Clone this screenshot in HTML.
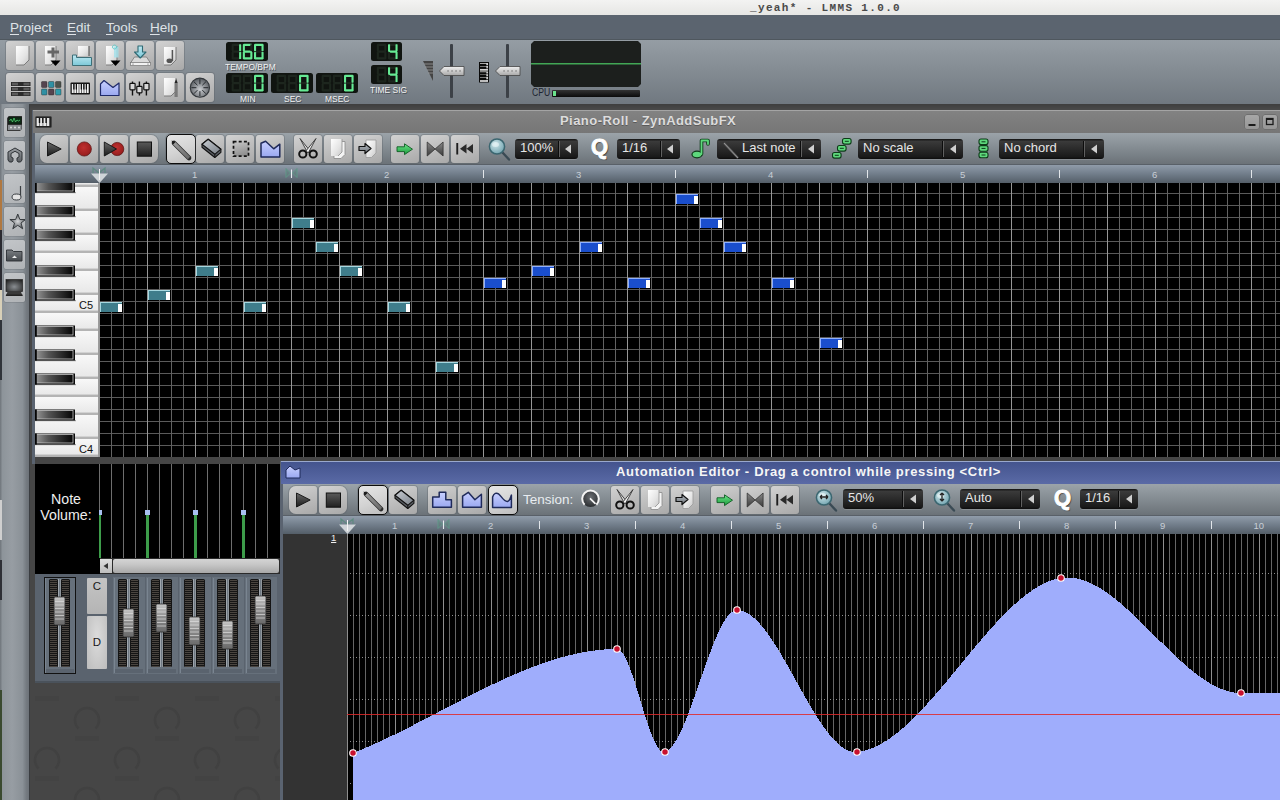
<!DOCTYPE html><html><head><meta charset="utf-8"><style>
*{margin:0;padding:0;box-sizing:border-box}
html,body{width:1280px;height:800px;overflow:hidden;background:#3a3a3a;font-family:"Liberation Sans",sans-serif}
div,svg,span{position:absolute}
.btn{border-radius:3px;background:linear-gradient(160deg,#d2d2d2 0%,#bfbfbf 45%,#a9a9a9 100%);box-shadow:0 0 0 1px rgba(90,95,100,0.35)}
.btn.sel{border:1.5px solid #0c0c0c;border-radius:5px;background:linear-gradient(160deg,#e6e6e6 0%,#d3d3d3 55%,#bdbdbd 100%)}
.combo{height:20px;border-radius:3px;background:linear-gradient(#111 0,#3a3a3a 12%,#2a2a2a 50%,#1a1a1a 88%,#0c0c0c 100%);box-shadow:0 1px 0 rgba(200,200,200,0.25);color:#e6e6e6;font-size:13px;line-height:18px;white-space:nowrap}
.combo .dv{top:2px;bottom:2px;width:1px;background:#606060;box-shadow:-1px 0 0 #0c0c0c}
.lbl{color:#f2f2f2;font-size:9.6px;white-space:nowrap;line-height:10px}
</style></head><body>
<svg width="0" height="0" style="position:absolute"><defs>
<linearGradient id="gPage" x1="0" y1="0" x2="1" y2="1"><stop offset="0" stop-color="#ffffff"/><stop offset="0.6" stop-color="#e4e4e4"/><stop offset="1" stop-color="#c8c8c8"/></linearGradient>
<linearGradient id="gBlackKey" x1="0" y1="0" x2="1" y2="0"><stop offset="0" stop-color="#9a9a9a"/><stop offset="0.35" stop-color="#555"/><stop offset="1" stop-color="#050505"/></linearGradient>
<linearGradient id="gWhiteKey" x1="0" y1="0" x2="0" y2="1"><stop offset="0" stop-color="#f8f8f8"/><stop offset="1" stop-color="#e6e6e6"/></linearGradient>
<linearGradient id="gDark" x1="0" y1="0" x2="1" y2="1"><stop offset="0" stop-color="#777"/><stop offset="1" stop-color="#111"/></linearGradient>
<radialGradient id="gRed" cx="0.45" cy="0.4" r="0.65"><stop offset="0" stop-color="#bf3030"/><stop offset="0.8" stop-color="#9c1f1f"/><stop offset="1" stop-color="#7a1515"/></radialGradient><linearGradient id="gDark2" x1="0" y1="0" x2="0" y2="1"><stop offset="0" stop-color="#6a6a6a"/><stop offset="1" stop-color="#1a1a1a"/></linearGradient><linearGradient id="gDark3" x1="0" y1="0" x2="0" y2="1"><stop offset="0" stop-color="#5a5a5a"/><stop offset="1" stop-color="#202020"/></linearGradient>
<linearGradient id="gPen" x1="0" y1="0" x2="1" y2="1"><stop offset="0" stop-color="#9a9a9a"/><stop offset="1" stop-color="#6a6a6a"/></linearGradient><linearGradient id="gErase" x1="0" y1="0" x2="1" y2="1"><stop offset="0" stop-color="#c9ced4"/><stop offset="1" stop-color="#7a8088"/></linearGradient><linearGradient id="gSel" x1="0" y1="0" x2="0.3" y2="1"><stop offset="0" stop-color="#c8c8c8"/><stop offset="1" stop-color="#909090"/></linearGradient><linearGradient id="gGrayArr" x1="0" y1="0" x2="0" y2="1"><stop offset="0" stop-color="#b8bec4"/><stop offset="1" stop-color="#6a7076"/></linearGradient><linearGradient id="gBow" x1="0" y1="0" x2="0" y2="1"><stop offset="0" stop-color="#8a8a8a"/><stop offset="1" stop-color="#3a3a3a"/></linearGradient><radialGradient id="gLens" cx="0.4" cy="0.35" r="0.7"><stop offset="0" stop-color="#cfe6ea"/><stop offset="1" stop-color="#6fa2ae"/></radialGradient><radialGradient id="gKnobDark" cx="0.5" cy="0.4" r="0.6"><stop offset="0" stop-color="#6a6e72"/><stop offset="1" stop-color="#2a2d30"/></radialGradient><linearGradient id="gSbHead" x1="0" y1="0" x2="0" y2="1"><stop offset="0" stop-color="#9a9ea2"/><stop offset="1" stop-color="#5a5e62"/></linearGradient><radialGradient id="gStar" cx="0.5" cy="0.5" r="0.55"><stop offset="0" stop-color="#d8dadc"/><stop offset="1" stop-color="#4a4e52"/></radialGradient><linearGradient id="gFold" x1="0" y1="0" x2="0" y2="1"><stop offset="0" stop-color="#7a7e82"/><stop offset="1" stop-color="#45494d"/></linearGradient><radialGradient id="gMon" cx="0.5" cy="0.6" r="0.7"><stop offset="0" stop-color="#8a8e92"/><stop offset="1" stop-color="#222"/></radialGradient><linearGradient id="gKnobSl" x1="0" y1="0" x2="0" y2="1"><stop offset="0" stop-color="#f0f0f0"/><stop offset="1" stop-color="#a8a8a8"/></linearGradient><linearGradient id="gLav" x1="0" y1="0" x2="0" y2="1"><stop offset="0" stop-color="#c8d0ff"/><stop offset="1" stop-color="#9aa8f0"/></linearGradient>
<linearGradient id="gCyan" x1="0" y1="0" x2="0" y2="1"><stop offset="0" stop-color="#bfe9f2"/><stop offset="1" stop-color="#7cc8d8"/></linearGradient>
<radialGradient id="gKnob" cx="0.5" cy="0.6" r="0.6"><stop offset="0" stop-color="#c9ccd0"/><stop offset="1" stop-color="#55595e"/></radialGradient>
<linearGradient id="gGreen" x1="0" y1="0" x2="0" y2="1"><stop offset="0" stop-color="#6de58a"/><stop offset="1" stop-color="#1a9a3a"/></linearGradient>
<linearGradient id="gFader" x1="0" y1="0" x2="0" y2="1"><stop offset="0" stop-color="#c8c8c8"/><stop offset="0.5" stop-color="#8a8a8a"/><stop offset="1" stop-color="#6a6a6a"/></linearGradient>
</defs></svg>
<div style="left:0;top:0;width:1280px;height:15px;background:linear-gradient(#f3f3f2,#e6e6e4)"></div>
<div style="left:750px;top:2px;font-family:'Liberation Mono',monospace;font-size:11px;font-weight:bold;letter-spacing:1.35px;color:#4a4a4a;white-space:nowrap;line-height:13px">_yeah* - LMMS 1.0.0</div>
<div style="left:0;top:15px;width:1280px;height:24px;background:#5b646f"></div>
<div style="left:10px;top:20px;font-size:13.5px;color:#dfe3e7;line-height:16px;white-space:nowrap"><u style="text-decoration:underline;text-underline-offset:2px">P</u>roject</div>
<div style="left:67px;top:20px;font-size:13.5px;color:#dfe3e7;line-height:16px;white-space:nowrap"><u style="text-decoration:underline;text-underline-offset:2px">E</u>dit</div>
<div style="left:106px;top:20px;font-size:13.5px;color:#dfe3e7;line-height:16px;white-space:nowrap"><u style="text-decoration:underline;text-underline-offset:2px">T</u>ools</div>
<div style="left:150px;top:20px;font-size:13.5px;color:#dfe3e7;line-height:16px;white-space:nowrap"><u style="text-decoration:underline;text-underline-offset:2px">H</u>elp</div>
<div style="left:0;top:39px;width:1280px;height:65px;background:linear-gradient(#959da4,#838b92 50%,#707880);border-top:1px solid #4f575e"></div>
<div class="btn" style="left:6px;top:41px;width:28px;height:29px;"><svg width="28" height="29" viewBox="0 0 28 29" style="left:0;top:0"><path d="M10,5 H23 V19 L18,24 H10 Z" fill="url(#gPage)"/><path d="M23,5 V19 L18,24 H10" fill="none" stroke="#7a7a7a" stroke-width="1"/></svg></div>
<div class="btn" style="left:36px;top:41px;width:28px;height:29px;"><svg width="28" height="29" viewBox="0 0 28 29" style="left:0;top:0"><path d="M9,5 H20 V19 L15,24 H9 Z" fill="url(#gPage)"/><path d="M20,5 V19 L15,24 H9" fill="none" stroke="#7a7a7a" stroke-width="1"/><path d="M15.5,6.5 h3 v3 h4.5 v3 h-4.5 v4 h-3 v-4 h-4 v-3 h4 z" fill="#666"/><path d="M14.5,19.5 h10 l-5,5.5 z" fill="#000"/></svg></div>
<div class="btn" style="left:66px;top:41px;width:28px;height:29px;"><svg width="28" height="29" viewBox="0 0 28 29" style="left:0;top:0"><path d="M12,5 H23 V15 H12 Z" fill="url(#gPage)"/><path d="M23,5 V15" stroke="#444" stroke-width="1"/><path d="M6.5,14 h4 v2.5 h15 v8 h-19 z" fill="url(#gCyan)" stroke="#3d6f78" stroke-width="1"/></svg></div>
<div class="btn" style="left:96px;top:41px;width:28px;height:29px;"><svg width="28" height="29" viewBox="0 0 28 29" style="left:0;top:0"><path d="M10,5 H21 V19 L16,24 H10 Z" fill="url(#gPage)"/><path d="M21,5 V19 L16,24 H10" fill="none" stroke="#7a7a7a" stroke-width="1"/><path d="M18,5.5 h4.5 v11 h-4.5 z" fill="#a6e0ea" fill-opacity="0.85"/><path d="M18.5,8 a2,2 0 1,1 0.1,0" fill="none" stroke="#6cc" stroke-width="1"/><path d="M14.5,19.5 h10 l-5,5.5 z" fill="#000"/></svg></div>
<div class="btn" style="left:126px;top:41px;width:28px;height:29px;"><svg width="28" height="29" viewBox="0 0 28 29" style="left:0;top:0"><path d="M4.5,22 L8.5,16 H20.5 L24.5,22 Z" fill="#dadada" stroke="#777" stroke-width="0.8"/><rect x="4.5" y="21.5" width="20" height="3" fill="#f2f2f2" stroke="#777" stroke-width="0.7"/><circle cx="7" cy="23" r="0.6" fill="#555"/><circle cx="22" cy="23" r="0.6" fill="#555"/><path d="M12,5 h4.5 v6 h3.5 l-5.75,6 l-5.75,-6 h3.5 z" fill="url(#gCyan)" stroke="#2f6a74" stroke-width="1.1" stroke-linejoin="round"/></svg></div>
<div class="btn" style="left:156px;top:41px;width:28px;height:29px;"><svg width="28" height="29" viewBox="0 0 28 29" style="left:0;top:0"><path d="M8,6 H20 V19 L15,24 H8 Z" fill="url(#gPage)"/><path d="M20,6 V19 L15,24 H8" fill="none" stroke="#7a7a7a" stroke-width="1"/><path d="M16.4,9 V20" stroke="#555" stroke-width="1.5"/><ellipse cx="13.5" cy="19.8" rx="3" ry="2.3" fill="#555"/></svg></div>
<div class="btn" style="left:6px;top:73px;width:28px;height:29px;"><svg width="28" height="29" viewBox="0 0 28 29" style="left:0;top:0"><rect x="5" y="9" width="19.5" height="4" fill="#2a2a2a"/><rect x="6" y="9.7" width="6" height="2.6" fill="#5a5a5a"/><rect x="17.5" y="9.7" width="6" height="2.6" fill="#5a5a5a"/><rect x="5" y="14" width="19.5" height="4" fill="#2a2a2a"/><rect x="6" y="14.7" width="6" height="2.6" fill="#5a5a5a"/><rect x="17.5" y="14.7" width="6" height="2.6" fill="#5a5a5a"/><rect x="5" y="19" width="19.5" height="4" fill="#2a2a2a"/><rect x="6" y="19.7" width="6" height="2.6" fill="#5a5a5a"/><rect x="17.5" y="19.7" width="6" height="2.6" fill="#5a5a5a"/></svg></div>
<div class="btn" style="left:36px;top:73px;width:28px;height:29px;"><svg width="28" height="29" viewBox="0 0 28 29" style="left:0;top:0"><rect x="5.5" y="8.5" width="5.5" height="6" rx="0.8" fill="#55444f" stroke="#222" stroke-width="0.4"/><rect x="12.5" y="8.5" width="5.5" height="6" rx="0.8" fill="#2f90a4" stroke="#222" stroke-width="0.4"/><rect x="19.5" y="8.5" width="5.5" height="6" rx="0.8" fill="#4c534c" stroke="#222" stroke-width="0.4"/><rect x="5.5" y="16.0" width="5.5" height="6" rx="0.8" fill="#2f90a4" stroke="#222" stroke-width="0.4"/><rect x="12.5" y="16.0" width="5.5" height="6" rx="0.8" fill="#55444f" stroke="#222" stroke-width="0.4"/><rect x="19.5" y="16.0" width="5.5" height="6" rx="0.8" fill="#2f9cac" stroke="#222" stroke-width="0.4"/></svg></div>
<div class="btn" style="left:66px;top:73px;width:28px;height:29px;"><svg width="28" height="29" viewBox="0 0 28 29" style="left:0;top:0"><rect x="4.5" y="9.5" width="19.5" height="12" fill="#151515" rx="1"/><rect x="5.8" y="11" width="1.9" height="9" fill="#f2f2f2"/><rect x="8.3" y="11" width="1.9" height="9" fill="#f2f2f2"/><rect x="10.8" y="11" width="1.9" height="9" fill="#f2f2f2"/><rect x="13.3" y="11" width="1.9" height="9" fill="#f2f2f2"/><rect x="15.8" y="11" width="1.9" height="9" fill="#f2f2f2"/><rect x="18.3" y="11" width="1.9" height="9" fill="#f2f2f2"/><rect x="20.8" y="11" width="1.9" height="9" fill="#f2f2f2"/><rect x="7.2" y="11" width="1.3" height="5.5" fill="#111"/><rect x="9.7" y="11" width="1.3" height="5.5" fill="#111"/><rect x="14.7" y="11" width="1.3" height="5.5" fill="#111"/><rect x="17.2" y="11" width="1.3" height="5.5" fill="#111"/><rect x="19.7" y="11" width="1.3" height="5.5" fill="#111"/></svg></div>
<div class="btn" style="left:96px;top:73px;width:28px;height:29px;"><svg width="28" height="29" viewBox="0 0 28 29" style="left:0;top:0"><path d="M4.5,11 L8,7.5 L17,14.5 L23,10 V22.5 H4.5 Z" fill="url(#gLav)" stroke="#1f2a6a" stroke-width="1.2" stroke-linejoin="round"/></svg></div>
<div class="btn" style="left:126px;top:73px;width:28px;height:29px;"><svg width="28" height="29" viewBox="0 0 28 29" style="left:0;top:0"><path d="M6.5,8.5 V22.5" stroke="#111" stroke-width="1.4"/><rect x="3.9" y="10.3" width="5.2" height="6.5" rx="0.8" fill="#d8d8d8" stroke="#111" stroke-width="1.2"/><path d="M13.4,8.5 V22.5" stroke="#111" stroke-width="1.4"/><rect x="10.8" y="13.3" width="5.2" height="6.5" rx="0.8" fill="#d8d8d8" stroke="#111" stroke-width="1.2"/><path d="M20.4,8.5 V22.5" stroke="#111" stroke-width="1.4"/><rect x="17.799999999999997" y="10.3" width="5.2" height="6.5" rx="0.8" fill="#d8d8d8" stroke="#111" stroke-width="1.2"/></svg></div>
<div class="btn" style="left:156px;top:73px;width:28px;height:29px;"><svg width="28" height="29" viewBox="0 0 28 29" style="left:0;top:0"><path d="M8,5 H20 V18 L15,23 H8 Z" fill="url(#gPage)"/><path d="M20,5 V18 L15,23 H8" fill="none" stroke="#7a7a7a" stroke-width="1"/><rect x="18.5" y="10" width="3.2" height="14" fill="#7a7a7a"/><path d="M18.5,10 l1.6,-4 l1.6,4 z" fill="#222"/></svg></div>
<div class="btn" style="left:186px;top:73px;width:28px;height:29px;"><svg width="28" height="29" viewBox="0 0 28 29" style="left:0;top:0"><circle cx="13.9" cy="14.7" r="9.6" fill="url(#gKnob)" stroke="#33373b" stroke-width="1.1"/><line x1="17.40" y1="14.70" x2="22.40" y2="14.70" stroke="#25292d" stroke-width="1"/><line x1="16.37" y1="17.17" x2="19.91" y2="20.71" stroke="#25292d" stroke-width="1"/><line x1="13.90" y1="18.20" x2="13.90" y2="23.20" stroke="#25292d" stroke-width="1"/><line x1="11.43" y1="17.17" x2="7.89" y2="20.71" stroke="#25292d" stroke-width="1"/><line x1="10.40" y1="14.70" x2="5.40" y2="14.70" stroke="#25292d" stroke-width="1"/><line x1="11.43" y1="12.23" x2="7.89" y2="8.69" stroke="#25292d" stroke-width="1"/><line x1="13.90" y1="11.20" x2="13.90" y2="6.20" stroke="#25292d" stroke-width="1"/><line x1="16.37" y1="12.23" x2="19.91" y2="8.69" stroke="#25292d" stroke-width="1"/></svg></div>
<svg style="left:226px;top:42px;" width="42" height="19" viewBox="0 0 42 19"><rect x="0" y="0" width="42" height="19" rx="2.5" fill="#101410"/><rect x="6.00" y="1.80" width="8.80" height="2.10" rx="0.6" fill="#1d261e"/><rect x="6.00" y="15.30" width="8.80" height="2.10" rx="0.6" fill="#1d261e"/><rect x="6.00" y="8.55" width="8.80" height="2.10" rx="0.6" fill="#1d261e"/><rect x="5.60" y="2.20" width="2.10" height="7.00" rx="0.6" fill="#1d261e"/><rect x="13.10" y="2.20" width="2.10" height="7.00" rx="0.6" fill="#66ea94"/><rect x="5.60" y="10.00" width="2.10" height="7.00" rx="0.6" fill="#1d261e"/><rect x="13.10" y="10.00" width="2.10" height="7.00" rx="0.6" fill="#66ea94"/><rect x="17.20" y="1.80" width="8.80" height="2.10" rx="0.6" fill="#66ea94"/><rect x="17.20" y="15.30" width="8.80" height="2.10" rx="0.6" fill="#66ea94"/><rect x="17.20" y="8.55" width="8.80" height="2.10" rx="0.6" fill="#66ea94"/><rect x="16.80" y="2.20" width="2.10" height="7.00" rx="0.6" fill="#66ea94"/><rect x="24.30" y="2.20" width="2.10" height="7.00" rx="0.6" fill="#1d261e"/><rect x="16.80" y="10.00" width="2.10" height="7.00" rx="0.6" fill="#66ea94"/><rect x="24.30" y="10.00" width="2.10" height="7.00" rx="0.6" fill="#66ea94"/><rect x="28.40" y="1.80" width="8.80" height="2.10" rx="0.6" fill="#66ea94"/><rect x="28.40" y="15.30" width="8.80" height="2.10" rx="0.6" fill="#66ea94"/><rect x="28.40" y="8.55" width="8.80" height="2.10" rx="0.6" fill="#1d261e"/><rect x="28.00" y="2.20" width="2.10" height="7.00" rx="0.6" fill="#66ea94"/><rect x="35.50" y="2.20" width="2.10" height="7.00" rx="0.6" fill="#66ea94"/><rect x="28.00" y="10.00" width="2.10" height="7.00" rx="0.6" fill="#66ea94"/><rect x="35.50" y="10.00" width="2.10" height="7.00" rx="0.6" fill="#66ea94"/></svg>
<div class="lbl" style="left:225px;top:62px;transform:scaleX(0.88);transform-origin:0 0;text-shadow:1px 1px 0 rgba(40,45,50,0.6)">TEMPO/BPM</div>
<svg style="left:226px;top:73px;" width="42" height="20" viewBox="0 0 42 20"><rect x="0" y="0" width="42" height="20" rx="2.5" fill="#101410"/><rect x="6.00" y="1.80" width="8.80" height="2.10" rx="0.6" fill="#1d261e"/><rect x="6.00" y="16.30" width="8.80" height="2.10" rx="0.6" fill="#1d261e"/><rect x="6.00" y="9.05" width="8.80" height="2.10" rx="0.6" fill="#1d261e"/><rect x="5.60" y="2.20" width="2.10" height="7.50" rx="0.6" fill="#1d261e"/><rect x="13.10" y="2.20" width="2.10" height="7.50" rx="0.6" fill="#1d261e"/><rect x="5.60" y="10.50" width="2.10" height="7.50" rx="0.6" fill="#1d261e"/><rect x="13.10" y="10.50" width="2.10" height="7.50" rx="0.6" fill="#1d261e"/><rect x="17.20" y="1.80" width="8.80" height="2.10" rx="0.6" fill="#1d261e"/><rect x="17.20" y="16.30" width="8.80" height="2.10" rx="0.6" fill="#1d261e"/><rect x="17.20" y="9.05" width="8.80" height="2.10" rx="0.6" fill="#1d261e"/><rect x="16.80" y="2.20" width="2.10" height="7.50" rx="0.6" fill="#1d261e"/><rect x="24.30" y="2.20" width="2.10" height="7.50" rx="0.6" fill="#1d261e"/><rect x="16.80" y="10.50" width="2.10" height="7.50" rx="0.6" fill="#1d261e"/><rect x="24.30" y="10.50" width="2.10" height="7.50" rx="0.6" fill="#1d261e"/><rect x="28.40" y="1.80" width="8.80" height="2.10" rx="0.6" fill="#66ea94"/><rect x="28.40" y="16.30" width="8.80" height="2.10" rx="0.6" fill="#66ea94"/><rect x="28.40" y="9.05" width="8.80" height="2.10" rx="0.6" fill="#1d261e"/><rect x="28.00" y="2.20" width="2.10" height="7.50" rx="0.6" fill="#66ea94"/><rect x="35.50" y="2.20" width="2.10" height="7.50" rx="0.6" fill="#66ea94"/><rect x="28.00" y="10.50" width="2.10" height="7.50" rx="0.6" fill="#66ea94"/><rect x="35.50" y="10.50" width="2.10" height="7.50" rx="0.6" fill="#66ea94"/></svg>
<svg style="left:271px;top:73px;" width="42" height="20" viewBox="0 0 42 20"><rect x="0" y="0" width="42" height="20" rx="2.5" fill="#101410"/><rect x="6.00" y="1.80" width="8.80" height="2.10" rx="0.6" fill="#1d261e"/><rect x="6.00" y="16.30" width="8.80" height="2.10" rx="0.6" fill="#1d261e"/><rect x="6.00" y="9.05" width="8.80" height="2.10" rx="0.6" fill="#1d261e"/><rect x="5.60" y="2.20" width="2.10" height="7.50" rx="0.6" fill="#1d261e"/><rect x="13.10" y="2.20" width="2.10" height="7.50" rx="0.6" fill="#1d261e"/><rect x="5.60" y="10.50" width="2.10" height="7.50" rx="0.6" fill="#1d261e"/><rect x="13.10" y="10.50" width="2.10" height="7.50" rx="0.6" fill="#1d261e"/><rect x="17.20" y="1.80" width="8.80" height="2.10" rx="0.6" fill="#1d261e"/><rect x="17.20" y="16.30" width="8.80" height="2.10" rx="0.6" fill="#1d261e"/><rect x="17.20" y="9.05" width="8.80" height="2.10" rx="0.6" fill="#1d261e"/><rect x="16.80" y="2.20" width="2.10" height="7.50" rx="0.6" fill="#1d261e"/><rect x="24.30" y="2.20" width="2.10" height="7.50" rx="0.6" fill="#1d261e"/><rect x="16.80" y="10.50" width="2.10" height="7.50" rx="0.6" fill="#1d261e"/><rect x="24.30" y="10.50" width="2.10" height="7.50" rx="0.6" fill="#1d261e"/><rect x="28.40" y="1.80" width="8.80" height="2.10" rx="0.6" fill="#66ea94"/><rect x="28.40" y="16.30" width="8.80" height="2.10" rx="0.6" fill="#66ea94"/><rect x="28.40" y="9.05" width="8.80" height="2.10" rx="0.6" fill="#1d261e"/><rect x="28.00" y="2.20" width="2.10" height="7.50" rx="0.6" fill="#66ea94"/><rect x="35.50" y="2.20" width="2.10" height="7.50" rx="0.6" fill="#66ea94"/><rect x="28.00" y="10.50" width="2.10" height="7.50" rx="0.6" fill="#66ea94"/><rect x="35.50" y="10.50" width="2.10" height="7.50" rx="0.6" fill="#66ea94"/></svg>
<svg style="left:316px;top:73px;" width="42" height="20" viewBox="0 0 42 20"><rect x="0" y="0" width="42" height="20" rx="2.5" fill="#101410"/><rect x="6.00" y="1.80" width="8.80" height="2.10" rx="0.6" fill="#1d261e"/><rect x="6.00" y="16.30" width="8.80" height="2.10" rx="0.6" fill="#1d261e"/><rect x="6.00" y="9.05" width="8.80" height="2.10" rx="0.6" fill="#1d261e"/><rect x="5.60" y="2.20" width="2.10" height="7.50" rx="0.6" fill="#1d261e"/><rect x="13.10" y="2.20" width="2.10" height="7.50" rx="0.6" fill="#1d261e"/><rect x="5.60" y="10.50" width="2.10" height="7.50" rx="0.6" fill="#1d261e"/><rect x="13.10" y="10.50" width="2.10" height="7.50" rx="0.6" fill="#1d261e"/><rect x="17.20" y="1.80" width="8.80" height="2.10" rx="0.6" fill="#1d261e"/><rect x="17.20" y="16.30" width="8.80" height="2.10" rx="0.6" fill="#1d261e"/><rect x="17.20" y="9.05" width="8.80" height="2.10" rx="0.6" fill="#1d261e"/><rect x="16.80" y="2.20" width="2.10" height="7.50" rx="0.6" fill="#1d261e"/><rect x="24.30" y="2.20" width="2.10" height="7.50" rx="0.6" fill="#1d261e"/><rect x="16.80" y="10.50" width="2.10" height="7.50" rx="0.6" fill="#1d261e"/><rect x="24.30" y="10.50" width="2.10" height="7.50" rx="0.6" fill="#1d261e"/><rect x="28.40" y="1.80" width="8.80" height="2.10" rx="0.6" fill="#66ea94"/><rect x="28.40" y="16.30" width="8.80" height="2.10" rx="0.6" fill="#66ea94"/><rect x="28.40" y="9.05" width="8.80" height="2.10" rx="0.6" fill="#1d261e"/><rect x="28.00" y="2.20" width="2.10" height="7.50" rx="0.6" fill="#66ea94"/><rect x="35.50" y="2.20" width="2.10" height="7.50" rx="0.6" fill="#66ea94"/><rect x="28.00" y="10.50" width="2.10" height="7.50" rx="0.6" fill="#66ea94"/><rect x="35.50" y="10.50" width="2.10" height="7.50" rx="0.6" fill="#66ea94"/></svg>
<div class="lbl" style="left:240px;top:94px;transform:scaleX(0.88);transform-origin:0 0;text-shadow:1px 1px 0 rgba(40,45,50,0.6)">MIN</div>
<div class="lbl" style="left:284px;top:94px;transform:scaleX(0.88);transform-origin:0 0;text-shadow:1px 1px 0 rgba(40,45,50,0.6)">SEC</div>
<div class="lbl" style="left:325px;top:94px;transform:scaleX(0.88);transform-origin:0 0;text-shadow:1px 1px 0 rgba(40,45,50,0.6)">MSEC</div>
<svg style="left:371px;top:42px;" width="31" height="19" viewBox="0 0 31 19"><rect x="0" y="0" width="31" height="19" rx="2.5" fill="#101410"/><rect x="6.20" y="1.80" width="8.80" height="2.10" rx="0.6" fill="#1d261e"/><rect x="6.20" y="15.30" width="8.80" height="2.10" rx="0.6" fill="#1d261e"/><rect x="6.20" y="8.55" width="8.80" height="2.10" rx="0.6" fill="#1d261e"/><rect x="5.80" y="2.20" width="2.10" height="7.00" rx="0.6" fill="#1d261e"/><rect x="13.30" y="2.20" width="2.10" height="7.00" rx="0.6" fill="#1d261e"/><rect x="5.80" y="10.00" width="2.10" height="7.00" rx="0.6" fill="#1d261e"/><rect x="13.30" y="10.00" width="2.10" height="7.00" rx="0.6" fill="#1d261e"/><rect x="17.40" y="1.80" width="8.80" height="2.10" rx="0.6" fill="#1d261e"/><rect x="17.40" y="15.30" width="8.80" height="2.10" rx="0.6" fill="#1d261e"/><rect x="17.40" y="8.55" width="8.80" height="2.10" rx="0.6" fill="#66ea94"/><rect x="17.00" y="2.20" width="2.10" height="7.00" rx="0.6" fill="#66ea94"/><rect x="24.50" y="2.20" width="2.10" height="7.00" rx="0.6" fill="#66ea94"/><rect x="17.00" y="10.00" width="2.10" height="7.00" rx="0.6" fill="#1d261e"/><rect x="24.50" y="10.00" width="2.10" height="7.00" rx="0.6" fill="#66ea94"/></svg>
<svg style="left:371px;top:65px;" width="31" height="19" viewBox="0 0 31 19"><rect x="0" y="0" width="31" height="19" rx="2.5" fill="#101410"/><rect x="6.20" y="1.80" width="8.80" height="2.10" rx="0.6" fill="#1d261e"/><rect x="6.20" y="15.30" width="8.80" height="2.10" rx="0.6" fill="#1d261e"/><rect x="6.20" y="8.55" width="8.80" height="2.10" rx="0.6" fill="#1d261e"/><rect x="5.80" y="2.20" width="2.10" height="7.00" rx="0.6" fill="#1d261e"/><rect x="13.30" y="2.20" width="2.10" height="7.00" rx="0.6" fill="#1d261e"/><rect x="5.80" y="10.00" width="2.10" height="7.00" rx="0.6" fill="#1d261e"/><rect x="13.30" y="10.00" width="2.10" height="7.00" rx="0.6" fill="#1d261e"/><rect x="17.40" y="1.80" width="8.80" height="2.10" rx="0.6" fill="#1d261e"/><rect x="17.40" y="15.30" width="8.80" height="2.10" rx="0.6" fill="#1d261e"/><rect x="17.40" y="8.55" width="8.80" height="2.10" rx="0.6" fill="#66ea94"/><rect x="17.00" y="2.20" width="2.10" height="7.00" rx="0.6" fill="#66ea94"/><rect x="24.50" y="2.20" width="2.10" height="7.00" rx="0.6" fill="#66ea94"/><rect x="17.00" y="10.00" width="2.10" height="7.00" rx="0.6" fill="#1d261e"/><rect x="24.50" y="10.00" width="2.10" height="7.00" rx="0.6" fill="#66ea94"/></svg>
<div class="lbl" style="left:370px;top:85px;transform:scaleX(0.88);transform-origin:0 0;text-shadow:1px 1px 0 rgba(40,45,50,0.6)">TIME SIG</div>
<svg style="left:423px;top:61px;" width="11" height="21" viewBox="0 0 11 21"><path d="M0,0 H10 L10,20 Z" fill="#444"/><path d="M1,3 H10 M2,6 H10 M4,9 H10 M5,12 H10" stroke="#999" stroke-width="0.8"/></svg>
<div style="left:450px;top:44px;width:3px;height:54px;background:#3c4147;border-radius:1px"></div>
<svg style="left:439px;top:66px;" width="26" height="10" viewBox="0 0 26 10"><path d="M0.5,5 L5,0.5 H25 V9.5 H5 Z" fill="url(#gKnobSl)" stroke="#444" stroke-width="0.8"/><path d="M8.5,5 h1.5 M12.5,5 h1.5 M16.5,5 h1.5 M20.5,5 h1.5" stroke="#555" stroke-width="2"/><path d="M8.5,5 h1.5 M12.5,5 h1.5 M16.5,5 h1.5 M20.5,5 h1.5" stroke="#f4f4f4" stroke-width="1"/></svg>
<svg style="left:479px;top:62px;" width="11" height="21" viewBox="0 0 11 21"><rect x="0" y="0" width="10" height="20.5" fill="#0a0a0a"/><rect x="1" y="1.0" width="8" height="2.1" fill="#d0d0d0"/><rect x="1" y="3.8" width="8" height="2.1" fill="#d0d0d0"/><rect x="1" y="6.6" width="8" height="2.1" fill="#d0d0d0"/><rect x="1" y="9.399999999999999" width="8" height="2.1" fill="#d0d0d0"/><rect x="1" y="12.2" width="8" height="2.1" fill="#d0d0d0"/><rect x="1" y="15.0" width="8" height="2.1" fill="#d0d0d0"/><rect x="1" y="17.799999999999997" width="8" height="2.1" fill="#d0d0d0"/><rect x="0.5" y="1.8" width="6.8" height="2.3" fill="#0a0a0a"/><rect x="0.5" y="4.6" width="6.8" height="2.3" fill="#0a0a0a"/><rect x="0.5" y="10.2" width="6.8" height="2.3" fill="#0a0a0a"/><rect x="0.5" y="13.0" width="6.8" height="2.3" fill="#0a0a0a"/><rect x="0.5" y="15.8" width="6.8" height="2.3" fill="#0a0a0a"/></svg>
<div style="left:506px;top:44px;width:3px;height:54px;background:#3c4147;border-radius:1px"></div>
<svg style="left:495px;top:66px;" width="26" height="10" viewBox="0 0 26 10"><path d="M0.5,5 L5,0.5 H25 V9.5 H5 Z" fill="url(#gKnobSl)" stroke="#444" stroke-width="0.8"/><path d="M8.5,5 h1.5 M12.5,5 h1.5 M16.5,5 h1.5 M20.5,5 h1.5" stroke="#555" stroke-width="2"/><path d="M8.5,5 h1.5 M12.5,5 h1.5 M16.5,5 h1.5 M20.5,5 h1.5" stroke="#f4f4f4" stroke-width="1"/></svg>
<svg style="left:531px;top:41px;" width="110" height="46" viewBox="0 0 110 46"><path d="M3,0 H107 L110,3 V43 L107,46 H3 L0,43 V3 Z" fill="#1c1f1d"/><rect x="0" y="22.2" width="110" height="1.2" fill="#4cc864"/></svg>
<div style="left:532px;top:88px;font-size:10px;color:#1c2430;line-height:10px;transform:scaleX(0.86);transform-origin:0 0">CPU</div>
<div style="left:552px;top:90px;width:88px;height:7px;background:linear-gradient(#333,#0a0a0a);border-radius:1px"></div>
<div style="left:553px;top:91px;width:3px;height:5px;background:#6be38c"></div>
<div style="left:0;top:104px;width:1280px;height:6px;background:linear-gradient(#3e3e3e,#4a4a4a)"></div>
<div style="left:0;top:104px;width:30px;height:696px;background:linear-gradient(90deg,#6e747a 0,#8d949a 8%,#979da3 40%,#8a9197 75%,#747a80 88%,#6a7076 100%)"></div>
<div style="left:29px;top:104px;width:2px;height:696px;background:#3a3d40"></div>
<div style="left:4px;top:108px;width:21px;height:29px;border-radius:2px;background:linear-gradient(160deg,#c2c5c8,#b0b3b6);box-shadow:0 0 0 0.5px rgba(80,85,90,0.4)"><svg width="21" height="29" style="left:0;top:0"><path d="M3,10 L5,8 H18 V21 L16,23 H3 Z" fill="#3a3a3a"/><rect x="4.5" y="9" width="13" height="7" fill="#0c2a14" stroke="#111" stroke-width="0.6"/><path d="M5.5,13 l1.5,-2 l1.5,3 l1.5,-4 l1.5,4 l1.5,-2 l1.5,1 l1.5,-1" stroke="#4fd070" stroke-width="0.8" fill="none"/><rect x="4" y="17" width="13.5" height="5" fill="#8a8e92"/><circle cx="7" cy="19.5" r="1" fill="#ddd"/><circle cx="11" cy="19.5" r="1" fill="#ddd"/><circle cx="15" cy="19.5" r="1" fill="#ddd"/></svg></div>
<div style="left:4px;top:141px;width:21px;height:29px;border-radius:2px;background:linear-gradient(160deg,#c2c5c8,#b0b3b6);box-shadow:0 0 0 0.5px rgba(80,85,90,0.4)"><svg width="21" height="29" style="left:0;top:0"><path d="M11,7 L18,11 V19 L16.5,21 H14 L13,19.5 V17 L15,16 V12.5 L11,10.3 L7,12.5 V16 L9,17 V19.5 L8,21 H5.5 L4,19 V11 Z" fill="url(#gSbHead)" stroke="#2e3236" stroke-width="1" stroke-linejoin="round"/></svg></div>
<div style="left:4px;top:174px;width:21px;height:29px;border-radius:2px;background:linear-gradient(160deg,#c2c5c8,#b0b3b6);box-shadow:0 0 0 0.5px rgba(80,85,90,0.4)"><svg width="21" height="29" style="left:0;top:0"><path d="M16.5,12 V23" stroke="#3a3e42" stroke-width="1.2"/><ellipse cx="12.5" cy="23" rx="4.5" ry="3" fill="#e4e4e4" stroke="#3a3e42" stroke-width="1"/></svg></div>
<div style="left:4px;top:207px;width:21px;height:29px;border-radius:2px;background:linear-gradient(160deg,#c2c5c8,#b0b3b6);box-shadow:0 0 0 0.5px rgba(80,85,90,0.4)"><svg width="21" height="29" style="left:0;top:0"><path d="M13.75,7 L15.9,12.5 H21.6 L17,16 L18.7,21.8 L13.75,18.3 L8.8,21.8 L10.5,16 L5.9,12.5 H11.6 Z" fill="url(#gStar)" stroke="#2e3236" stroke-width="0.9" stroke-linejoin="round"/></svg></div>
<div style="left:4px;top:240px;width:21px;height:29px;border-radius:2px;background:linear-gradient(160deg,#c2c5c8,#b0b3b6);box-shadow:0 0 0 0.5px rgba(80,85,90,0.4)"><svg width="21" height="29" style="left:0;top:0"><path d="M2.5,10 H8 L9.5,11.5 H18 V21 H2.5 Z" fill="url(#gFold)" stroke="#2a2e32" stroke-width="0.9"/><path d="M8,18 L10.5,15.5 L13,18 Z" fill="#f0f0f0"/></svg></div>
<div style="left:4px;top:273px;width:21px;height:29px;border-radius:2px;background:linear-gradient(160deg,#c2c5c8,#b0b3b6);box-shadow:0 0 0 0.5px rgba(80,85,90,0.4)"><svg width="21" height="29" style="left:0;top:0"><rect x="2" y="6.6" width="16.5" height="12" fill="url(#gMon)" stroke="#222" stroke-width="0.7"/><path d="M1.6,23 H18.6 L17,19 H3.5 Z" fill="#3a3a3a"/><rect x="2" y="21.5" width="16.5" height="1.5" fill="#222"/></svg></div>
<div style="left:0;top:180px;width:2px;height:50px;background:#b07840"></div>
<div style="left:0;top:230px;width:2px;height:60px;background:#2a2a30"></div>
<div style="left:0;top:290px;width:2px;height:30px;background:#d8d0b8"></div>
<div style="left:0;top:320px;width:2px;height:60px;background:#30343a"></div>
<div style="left:0;top:500px;width:2px;height:40px;background:#cfcfcf"></div>
<div style="left:0;top:560px;width:2px;height:40px;background:#2e3036"></div>
<div style="left:0;top:690px;width:2px;height:110px;background:#3a4a30"></div>
<div style="left:30px;top:104px;width:1250px;height:696px;background:#464646"></div>
<div style="left:30px;top:104px;width:1250px;height:6px;background:linear-gradient(#3e3e3e,#4a4a4a)"></div>
<div style="left:32px;top:110px;width:1248px;height:354px;background:#5a6370"></div>
<div style="left:33px;top:110px;width:1247px;height:23px;background:linear-gradient(#828282,#767676);border-top:1px solid #a4a4a4"></div>
<svg style="left:35px;top:116px;" width="17" height="12" viewBox="0 0 17 12"><rect x="0.5" y="0.5" width="16" height="11" rx="1" fill="#222" stroke="#444" stroke-width="0.8"/><rect x="1.6" y="2" width="2.8" height="8" fill="#e8e8e8"/><rect x="4.9" y="2" width="2.8" height="8" fill="#e8e8e8"/><rect x="8.2" y="2" width="2.8" height="8" fill="#e8e8e8"/><rect x="11.499999999999998" y="2" width="2.8" height="8" fill="#e8e8e8"/><rect x="3.8" y="2" width="1.4" height="5" fill="#111"/><rect x="7.1" y="2" width="1.4" height="5" fill="#111"/><rect x="10.399999999999999" y="2" width="1.4" height="5" fill="#111"/></svg>
<div style="left:560px;top:113px;font-size:13px;font-weight:bold;color:#dcdcdc;white-space:nowrap;line-height:16px;letter-spacing:0.45px;text-shadow:0 1px 0 #5a5a5a">Piano-Roll - ZynAddSubFX</div>
<div style="left:1244px;top:114px;width:16px;height:15.5px;border-radius:3px;background:linear-gradient(#a8a8a8,#959595);box-shadow:inset 0 0 0 1px #6e6e6e"><svg width="16" height="16" style="left:0;top:0"><rect x="4.5" y="10" width="7" height="2" fill="#1a1a1a"/></svg></div>
<div style="left:1262px;top:114px;width:16px;height:15.5px;border-radius:3px;background:linear-gradient(#a8a8a8,#959595);box-shadow:inset 0 0 0 1px #6e6e6e"><svg width="16" height="16" style="left:0;top:0"><rect x="4.5" y="4.5" width="6.5" height="6" fill="none" stroke="#1a1a1a" stroke-width="1.3"/><rect x="4.5" y="4" width="6.5" height="2" fill="#1a1a1a"/></svg></div>
<div style="left:35px;top:133px;width:1245px;height:32px;background:linear-gradient(#9ba3a9,#838b91 50%,#6b7278);border-bottom:1px solid #596068"></div>
<div class="btn" style="left:40px;top:135px;width:28px;height:28px;border-radius:7px 3px 3px 7px"><svg width="28" height="28" viewBox="0 0 28 28" style="left:0;top:0"><path d="M7.5,7 L21.2,14 L7.5,21 Z" fill="url(#gDark2)" stroke="#111" stroke-width="0.9" stroke-linejoin="round"/></svg></div>
<div class="btn" style="left:70px;top:135px;width:28px;height:28px;"><svg width="28" height="28" viewBox="0 0 28 28" style="left:0;top:0"><circle cx="14.3" cy="14" r="7.1" fill="url(#gRed)" stroke="#5a1010" stroke-width="0.7"/></svg></div>
<div class="btn" style="left:100px;top:135px;width:28px;height:28px;"><svg width="28" height="28" viewBox="0 0 28 28" style="left:0;top:0"><circle cx="17.2" cy="14" r="6.6" fill="url(#gRed)" stroke="#5a1010" stroke-width="0.7"/><path d="M4.3,7 L16.5,14 L4.3,21 Z" fill="url(#gDark2)" stroke="#111" stroke-width="0.9" stroke-linejoin="round"/></svg></div>
<div class="btn" style="left:130px;top:135px;width:28px;height:28px;border-radius:3px 7px 7px 3px"><svg width="28" height="28" viewBox="0 0 28 28" style="left:0;top:0"><rect x="7.3" y="7" width="14.2" height="14.2" fill="url(#gDark3)" stroke="#111" stroke-width="1"/></svg></div>
<div class="btn sel" style="left:166px;top:134px;width:29.5px;height:29.5px"><svg width="28" height="28" viewBox="0 0 28 28" style="left:-1px;top:-0.5px"><path d="M8,8 L23,23" stroke="#2a2a2a" stroke-width="4.6" stroke-linecap="round"/><path d="M8,8 L23,23" stroke="url(#gPen)" stroke-width="3.2" stroke-linecap="butt"/><path d="M5.5,5.5 L9.5,7 L7,9.5 Z" fill="#1a1a1a"/></svg></div>
<div class="btn" style="left:196px;top:135px;width:28px;height:28px;"><svg width="28" height="28" viewBox="0 0 28 28" style="left:0;top:0"><path d="M6,9.2 L12.2,4.3 L24.9,14.2 L24.9,17.3 L18.8,22.5 L6,12.3 Z" fill="#5a5e64" stroke="#111" stroke-width="1.1" stroke-linejoin="round"/><path d="M6,9.2 L12.2,4.3 L24.9,14.2 L18.8,19.3 Z" fill="url(#gErase)" stroke="#111" stroke-width="1.1" stroke-linejoin="round"/><path d="M18.8,19.3 V22.5" stroke="#111" stroke-width="1"/></svg></div>
<div class="btn" style="left:226px;top:135px;width:28px;height:28px;"><svg width="28" height="28" viewBox="0 0 28 28" style="left:0;top:0"><rect x="7.5" y="6.7" width="15" height="14.5" fill="url(#gSel)" stroke="#111" stroke-width="1.7" stroke-dasharray="3 2.2"/></svg></div>
<div class="btn" style="left:256px;top:135px;width:28px;height:28px;"><svg width="28" height="28" viewBox="0 0 28 28" style="left:0;top:0"><path d="M5,8.2 L9.6,6.2 L17.7,13.8 L23.8,9.2 V21.9 H5 Z" fill="url(#gLav)" stroke="#1f2a5a" stroke-width="1.5" stroke-linejoin="round"/></svg></div>
<div class="btn" style="left:294px;top:135px;width:28px;height:28px;"><svg width="28" height="28" viewBox="0 0 28 28" style="left:0;top:0"><path d="M6,3.5 L16.5,16.5 L13.5,17.5 Z" fill="#e0e0e0" stroke="#333" stroke-width="0.9" stroke-linejoin="round"/><path d="M22,3.5 L11.5,16.5 L14.5,17.5 Z" fill="#f0f0f0" stroke="#333" stroke-width="0.9" stroke-linejoin="round"/><circle cx="8.8" cy="19" r="3.6" fill="none" stroke="#111" stroke-width="2"/><circle cx="19.2" cy="19" r="3.6" fill="none" stroke="#111" stroke-width="2"/></svg></div>
<div class="btn" style="left:324px;top:135px;width:28px;height:28px;"><svg width="28" height="28" viewBox="0 0 28 28" style="left:0;top:0"><path d="M10,6.5 H21 V19.5 L17,23.5 H10 Z" fill="#f4f4f4" stroke="#888" stroke-width="0.8"/><path d="M7,4 H18 V17 L14,21 H7 Z" fill="url(#gPage)"/><path d="M18,4 V17 L14,21" fill="none" stroke="#999" stroke-width="0.9"/></svg></div>
<div class="btn" style="left:354px;top:135px;width:28px;height:28px;"><svg width="28" height="28" viewBox="0 0 28 28" style="left:0;top:0"><path d="M12,5 H22 V18 L17.5,22.5 H12 Z" fill="url(#gPage)" stroke="#999" stroke-width="0.8"/><path d="M5,11.5 H11 V8.5 L17,13.5 L11,18.5 V15.5 H5 Z" fill="url(#gGrayArr)" stroke="#111" stroke-width="1.2" stroke-linejoin="round"/></svg></div>
<div class="btn" style="left:391px;top:135px;width:28px;height:28px;"><svg width="28" height="28" viewBox="0 0 28 28" style="left:0;top:0"><path d="M6,11.8 H13.5 V8.8 L21.5,14.2 L13.5,19.6 V16.6 H6 Z" fill="url(#gGreen)" stroke="#0f5a22" stroke-width="0.9" stroke-linejoin="round"/></svg></div>
<div class="btn" style="left:421px;top:135px;width:28px;height:28px;"><svg width="28" height="28" viewBox="0 0 28 28" style="left:0;top:0"><path d="M6.2,7 L14.1,14 L6.2,21 Z M22.1,7 L14.1,14 L22.1,21 Z" fill="url(#gBow)" stroke="#333" stroke-width="0.8" stroke-linejoin="round"/></svg></div>
<div class="btn" style="left:451px;top:135px;width:28px;height:28px;"><svg width="28" height="28" viewBox="0 0 28 28" style="left:0;top:0"><rect x="5.3" y="8" width="1.9" height="11.5" fill="#1e1e1e"/><path d="M9,13.8 L15.5,9 V18.6 Z M15.5,13.8 L22,9 V18.6 Z" fill="#2a2a2a"/></svg></div>
<svg style="left:487px;top:137px;" width="24" height="24" viewBox="0 0 24 24"><path d="M15.5,15.5 L22,22.5" stroke="#3a4a54" stroke-width="2.4" stroke-linecap="round"/><circle cx="10" cy="9.5" r="7.6" fill="url(#gLens)" stroke="#3b6670" stroke-width="1.5"/><ellipse cx="8.5" cy="7.5" rx="3.5" ry="2.5" fill="#eef8fa" fill-opacity="0.6"/></svg>
<div class="combo" style="left:515px;top:139px;width:63px"><div class="dv" style="left:44px"></div><span style="left:5px;top:0px">100%</span><svg width="8" height="10" style="left:50px;top:5px"><path d="M6,0.5 V9.5 L0,5 Z" fill="#cfcfcf"/></svg></div>
<div style="left:591px;top:134px;font-size:22px;font-weight:bold;color:#fff;line-height:26px;-webkit-text-stroke:0.9px #fff;text-shadow:1px 1px 1px #333">Q</div>
<div class="combo" style="left:617px;top:139px;width:63px"><div class="dv" style="left:44px"></div><span style="left:5px;top:0px">1/16</span><svg width="8" height="10" style="left:50px;top:5px"><path d="M6,0.5 V9.5 L0,5 Z" fill="#cfcfcf"/></svg></div>
<svg style="left:688px;top:136px;" width="24" height="24" viewBox="0 0 24 24"><path d="M13.5,18 V4.5 H20 V8" fill="none" stroke="#0d3a18" stroke-width="3.6" stroke-linejoin="round" stroke-linecap="round"/><ellipse cx="9" cy="18.5" rx="5" ry="3.3" fill="#5ed87c" stroke="#0d3a18" stroke-width="1.2"/><path d="M13.5,18 V4.5 H20 V8" fill="none" stroke="#5ed87c" stroke-width="1.8" stroke-linejoin="round" stroke-linecap="round"/></svg>
<div class="combo" style="left:717px;top:139px;width:104px"><svg width="24" height="20" style="left:2px;top:0"><path d="M5,4 L19,19" stroke="#5a5a5a" stroke-width="2.2"/><path d="M5,4 L19,19" stroke="#9a9a9a" stroke-width="0.9"/></svg><div class="dv" style="left:84px"></div><span style="left:25px;top:0px">Last note</span><svg width="8" height="10" style="left:91px;top:5px"><path d="M6,0.5 V9.5 L0,5 Z" fill="#cfcfcf"/></svg></div>
<svg style="left:831px;top:136px;" width="22" height="24" viewBox="0 0 22 24"><rect x="1.5" y="16.5" width="8.6" height="5.6" rx="2" fill="#5ed87c" stroke="#0d3a18" stroke-width="1.1"/><rect x="3.8" y="18.8" width="4" height="1" fill="#0d3a18"/><rect x="6.5" y="9.5" width="8.6" height="5.6" rx="2" fill="#5ed87c" stroke="#0d3a18" stroke-width="1.1"/><rect x="8.8" y="11.8" width="4" height="1" fill="#0d3a18"/><rect x="11.5" y="2.5" width="8.6" height="5.6" rx="2" fill="#5ed87c" stroke="#0d3a18" stroke-width="1.1"/><rect x="13.8" y="4.8" width="4" height="1" fill="#0d3a18"/></svg>
<div class="combo" style="left:858px;top:139px;width:105px"><div class="dv" style="left:85px"></div><span style="left:5px;top:0px">No scale</span><svg width="8" height="10" style="left:92px;top:5px"><path d="M6,0.5 V9.5 L0,5 Z" fill="#cfcfcf"/></svg></div>
<svg style="left:977px;top:136px;" width="14" height="24" viewBox="0 0 14 24"><rect x="2" y="3" width="9" height="5.6" rx="2" fill="#5ed87c" stroke="#0d3a18" stroke-width="1.1"/><rect x="4.5" y="5.3" width="4" height="1" fill="#0d3a18"/><rect x="2" y="9.6" width="9" height="5.6" rx="2" fill="#5ed87c" stroke="#0d3a18" stroke-width="1.1"/><rect x="4.5" y="11.899999999999999" width="4" height="1" fill="#0d3a18"/><rect x="2" y="16.2" width="9" height="5.6" rx="2" fill="#5ed87c" stroke="#0d3a18" stroke-width="1.1"/><rect x="4.5" y="18.5" width="4" height="1" fill="#0d3a18"/></svg>
<div class="combo" style="left:999px;top:139px;width:105px"><div class="dv" style="left:85px"></div><span style="left:5px;top:0px">No chord</span><svg width="8" height="10" style="left:92px;top:5px"><path d="M6,0.5 V9.5 L0,5 Z" fill="#cfcfcf"/></svg></div>
<div style="left:35px;top:165px;width:1245px;height:18px;background:linear-gradient(#909caa,#717d8a 50%,#545e68)"></div>
<div style="left:192px;top:170px;font-size:9.5px;color:#c8ced6;line-height:10px">1</div>
<div style="left:384px;top:170px;font-size:9.5px;color:#c8ced6;line-height:10px">2</div>
<div style="left:576px;top:170px;font-size:9.5px;color:#c8ced6;line-height:10px">3</div>
<div style="left:768px;top:170px;font-size:9.5px;color:#c8ced6;line-height:10px">4</div>
<div style="left:960px;top:170px;font-size:9.5px;color:#c8ced6;line-height:10px">5</div>
<div style="left:1152px;top:170px;font-size:9.5px;color:#c8ced6;line-height:10px">6</div>
<div style="left:483px;top:170px;width:1px;height:8px;background:#e2e6ea"></div>
<div style="left:675px;top:170px;width:1px;height:8px;background:#e2e6ea"></div>
<div style="left:867px;top:170px;width:1px;height:8px;background:#e2e6ea"></div>
<div style="left:1059px;top:170px;width:1px;height:8px;background:#e2e6ea"></div>
<div style="left:1251px;top:170px;width:1px;height:8px;background:#e2e6ea"></div>
<svg style="left:88px;top:166px;" width="22" height="17" viewBox="0 0 22 17"><path d="M5,7.5 V2 L11,7 L17,2 V7.5" fill="none" stroke="#5f8a80" stroke-width="1.2"/><path d="M3,7.5 H20 L11.5,17 Z" fill="#cfd4d8"/><path d="M11.5,3 V14" stroke="#f4f4f4" stroke-width="1"/></svg>
<svg style="left:285px;top:167px;" width="13" height="13" viewBox="0 0 13 13"><path d="M1,1.5 V10.5 L5.5,6 Z M12,1.5 V10.5 L7.5,6 Z" fill="#4f7a70" fill-opacity="0.35" stroke="#5f9a88" stroke-width="0.9"/><path d="M6.5,2.5 V11" stroke="#e8eef0" stroke-width="1.1"/></svg>
<svg style="left:35px;top:183px;" width="64" height="275" viewBox="0 0 64 275"><rect x="0" y="0" width="64" height="275" fill="#e9e9e9"/><rect x="0" y="-32" width="63" height="18" fill="url(#gWhiteKey)"/><rect x="0" y="-16" width="63" height="2" fill="#b4b4b4"/><rect x="0" y="-17" width="63" height="1" fill="#d2d2d2"/><rect x="0" y="-56" width="63" height="24" fill="url(#gWhiteKey)"/><rect x="0" y="-34" width="63" height="2" fill="#b4b4b4"/><rect x="0" y="-35" width="63" height="1" fill="#d2d2d2"/><rect x="0" y="-74" width="63" height="18" fill="url(#gWhiteKey)"/><rect x="0" y="-58" width="63" height="2" fill="#b4b4b4"/><rect x="0" y="-59" width="63" height="1" fill="#d2d2d2"/><rect x="0" y="-92" width="63" height="18" fill="url(#gWhiteKey)"/><rect x="0" y="-76" width="63" height="2" fill="#b4b4b4"/><rect x="0" y="-77" width="63" height="1" fill="#d2d2d2"/><rect x="0" y="-116" width="63" height="24" fill="url(#gWhiteKey)"/><rect x="0" y="-94" width="63" height="2" fill="#b4b4b4"/><rect x="0" y="-95" width="63" height="1" fill="#d2d2d2"/><rect x="0" y="-140" width="63" height="24" fill="url(#gWhiteKey)"/><rect x="0" y="-118" width="63" height="2" fill="#b4b4b4"/><rect x="0" y="-119" width="63" height="1" fill="#d2d2d2"/><rect x="0" y="-158" width="63" height="18" fill="url(#gWhiteKey)"/><rect x="0" y="-142" width="63" height="2" fill="#b4b4b4"/><rect x="0" y="-143" width="63" height="1" fill="#d2d2d2"/><rect x="0" y="112" width="63" height="18" fill="url(#gWhiteKey)"/><rect x="0" y="128" width="63" height="2" fill="#b4b4b4"/><rect x="0" y="127" width="63" height="1" fill="#d2d2d2"/><rect x="0" y="88" width="63" height="24" fill="url(#gWhiteKey)"/><rect x="0" y="110" width="63" height="2" fill="#b4b4b4"/><rect x="0" y="109" width="63" height="1" fill="#d2d2d2"/><rect x="0" y="70" width="63" height="18" fill="url(#gWhiteKey)"/><rect x="0" y="86" width="63" height="2" fill="#b4b4b4"/><rect x="0" y="85" width="63" height="1" fill="#d2d2d2"/><rect x="0" y="52" width="63" height="18" fill="url(#gWhiteKey)"/><rect x="0" y="68" width="63" height="2" fill="#b4b4b4"/><rect x="0" y="67" width="63" height="1" fill="#d2d2d2"/><rect x="0" y="28" width="63" height="24" fill="url(#gWhiteKey)"/><rect x="0" y="50" width="63" height="2" fill="#b4b4b4"/><rect x="0" y="49" width="63" height="1" fill="#d2d2d2"/><rect x="0" y="4" width="63" height="24" fill="url(#gWhiteKey)"/><rect x="0" y="26" width="63" height="2" fill="#b4b4b4"/><rect x="0" y="25" width="63" height="1" fill="#d2d2d2"/><rect x="0" y="-14" width="63" height="18" fill="url(#gWhiteKey)"/><rect x="0" y="2" width="63" height="2" fill="#b4b4b4"/><rect x="0" y="1" width="63" height="1" fill="#d2d2d2"/><rect x="0" y="256" width="63" height="18" fill="url(#gWhiteKey)"/><rect x="0" y="272" width="63" height="2" fill="#b4b4b4"/><rect x="0" y="271" width="63" height="1" fill="#d2d2d2"/><rect x="0" y="232" width="63" height="24" fill="url(#gWhiteKey)"/><rect x="0" y="254" width="63" height="2" fill="#b4b4b4"/><rect x="0" y="253" width="63" height="1" fill="#d2d2d2"/><rect x="0" y="214" width="63" height="18" fill="url(#gWhiteKey)"/><rect x="0" y="230" width="63" height="2" fill="#b4b4b4"/><rect x="0" y="229" width="63" height="1" fill="#d2d2d2"/><rect x="0" y="196" width="63" height="18" fill="url(#gWhiteKey)"/><rect x="0" y="212" width="63" height="2" fill="#b4b4b4"/><rect x="0" y="211" width="63" height="1" fill="#d2d2d2"/><rect x="0" y="172" width="63" height="24" fill="url(#gWhiteKey)"/><rect x="0" y="194" width="63" height="2" fill="#b4b4b4"/><rect x="0" y="193" width="63" height="1" fill="#d2d2d2"/><rect x="0" y="148" width="63" height="24" fill="url(#gWhiteKey)"/><rect x="0" y="170" width="63" height="2" fill="#b4b4b4"/><rect x="0" y="169" width="63" height="1" fill="#d2d2d2"/><rect x="0" y="130" width="63" height="18" fill="url(#gWhiteKey)"/><rect x="0" y="146" width="63" height="2" fill="#b4b4b4"/><rect x="0" y="145" width="63" height="1" fill="#d2d2d2"/><rect x="0" y="-37.5" width="40" height="11" fill="#0a0a0a"/><rect x="0" y="-36.5" width="38" height="8.5" fill="url(#gBlackKey)" stroke="#c8c8c8" stroke-width="0.8"/><rect x="0" y="-37.5" width="1.8" height="11" fill="#050505"/><rect x="0" y="-27" width="41" height="1.2" fill="#000" fill-opacity="0.35"/><rect x="0" y="-61.5" width="40" height="11" fill="#0a0a0a"/><rect x="0" y="-60.5" width="38" height="8.5" fill="url(#gBlackKey)" stroke="#c8c8c8" stroke-width="0.8"/><rect x="0" y="-61.5" width="1.8" height="11" fill="#050505"/><rect x="0" y="-51" width="41" height="1.2" fill="#000" fill-opacity="0.35"/><rect x="0" y="-97.5" width="40" height="11" fill="#0a0a0a"/><rect x="0" y="-96.5" width="38" height="8.5" fill="url(#gBlackKey)" stroke="#c8c8c8" stroke-width="0.8"/><rect x="0" y="-97.5" width="1.8" height="11" fill="#050505"/><rect x="0" y="-87" width="41" height="1.2" fill="#000" fill-opacity="0.35"/><rect x="0" y="-121.5" width="40" height="11" fill="#0a0a0a"/><rect x="0" y="-120.5" width="38" height="8.5" fill="url(#gBlackKey)" stroke="#c8c8c8" stroke-width="0.8"/><rect x="0" y="-121.5" width="1.8" height="11" fill="#050505"/><rect x="0" y="-111" width="41" height="1.2" fill="#000" fill-opacity="0.35"/><rect x="0" y="-145.5" width="40" height="11" fill="#0a0a0a"/><rect x="0" y="-144.5" width="38" height="8.5" fill="url(#gBlackKey)" stroke="#c8c8c8" stroke-width="0.8"/><rect x="0" y="-145.5" width="1.8" height="11" fill="#050505"/><rect x="0" y="-135" width="41" height="1.2" fill="#000" fill-opacity="0.35"/><rect x="0" y="106.5" width="40" height="11" fill="#0a0a0a"/><rect x="0" y="107.5" width="38" height="8.5" fill="url(#gBlackKey)" stroke="#c8c8c8" stroke-width="0.8"/><rect x="0" y="106.5" width="1.8" height="11" fill="#050505"/><rect x="0" y="117" width="41" height="1.2" fill="#000" fill-opacity="0.35"/><rect x="0" y="82.5" width="40" height="11" fill="#0a0a0a"/><rect x="0" y="83.5" width="38" height="8.5" fill="url(#gBlackKey)" stroke="#c8c8c8" stroke-width="0.8"/><rect x="0" y="82.5" width="1.8" height="11" fill="#050505"/><rect x="0" y="93" width="41" height="1.2" fill="#000" fill-opacity="0.35"/><rect x="0" y="46.5" width="40" height="11" fill="#0a0a0a"/><rect x="0" y="47.5" width="38" height="8.5" fill="url(#gBlackKey)" stroke="#c8c8c8" stroke-width="0.8"/><rect x="0" y="46.5" width="1.8" height="11" fill="#050505"/><rect x="0" y="57" width="41" height="1.2" fill="#000" fill-opacity="0.35"/><rect x="0" y="22.5" width="40" height="11" fill="#0a0a0a"/><rect x="0" y="23.5" width="38" height="8.5" fill="url(#gBlackKey)" stroke="#c8c8c8" stroke-width="0.8"/><rect x="0" y="22.5" width="1.8" height="11" fill="#050505"/><rect x="0" y="33" width="41" height="1.2" fill="#000" fill-opacity="0.35"/><rect x="0" y="-1.5" width="40" height="11" fill="#0a0a0a"/><rect x="0" y="-0.5" width="38" height="8.5" fill="url(#gBlackKey)" stroke="#c8c8c8" stroke-width="0.8"/><rect x="0" y="-1.5" width="1.8" height="11" fill="#050505"/><rect x="0" y="9" width="41" height="1.2" fill="#000" fill-opacity="0.35"/><rect x="0" y="250.5" width="40" height="11" fill="#0a0a0a"/><rect x="0" y="251.5" width="38" height="8.5" fill="url(#gBlackKey)" stroke="#c8c8c8" stroke-width="0.8"/><rect x="0" y="250.5" width="1.8" height="11" fill="#050505"/><rect x="0" y="261" width="41" height="1.2" fill="#000" fill-opacity="0.35"/><rect x="0" y="226.5" width="40" height="11" fill="#0a0a0a"/><rect x="0" y="227.5" width="38" height="8.5" fill="url(#gBlackKey)" stroke="#c8c8c8" stroke-width="0.8"/><rect x="0" y="226.5" width="1.8" height="11" fill="#050505"/><rect x="0" y="237" width="41" height="1.2" fill="#000" fill-opacity="0.35"/><rect x="0" y="190.5" width="40" height="11" fill="#0a0a0a"/><rect x="0" y="191.5" width="38" height="8.5" fill="url(#gBlackKey)" stroke="#c8c8c8" stroke-width="0.8"/><rect x="0" y="190.5" width="1.8" height="11" fill="#050505"/><rect x="0" y="201" width="41" height="1.2" fill="#000" fill-opacity="0.35"/><rect x="0" y="166.5" width="40" height="11" fill="#0a0a0a"/><rect x="0" y="167.5" width="38" height="8.5" fill="url(#gBlackKey)" stroke="#c8c8c8" stroke-width="0.8"/><rect x="0" y="166.5" width="1.8" height="11" fill="#050505"/><rect x="0" y="177" width="41" height="1.2" fill="#000" fill-opacity="0.35"/><rect x="0" y="142.5" width="40" height="11" fill="#0a0a0a"/><rect x="0" y="143.5" width="38" height="8.5" fill="url(#gBlackKey)" stroke="#c8c8c8" stroke-width="0.8"/><rect x="0" y="142.5" width="1.8" height="11" fill="#050505"/><rect x="0" y="153" width="41" height="1.2" fill="#000" fill-opacity="0.35"/><text x="58" y="125.5" font-size="11" text-anchor="end" fill="#111" font-family="Liberation Sans">C5</text><text x="58" y="269.5" font-size="11" text-anchor="end" fill="#111" font-family="Liberation Sans">C4</text><rect x="63" y="0" width="1" height="275" fill="#9a9a9a"/></svg>
<div style="left:99px;top:183px;width:1181px;height:275px;background-color:#000;
background-image:linear-gradient(90deg,#626262 1px,transparent 1px),linear-gradient(#5a5a5a 1px,transparent 1px);
background-size:12px 12px;background-position:0 10px"></div>
<div style="left:99px;top:183px;width:1181px;height:275px;background-image:linear-gradient(90deg,#969696 1px,transparent 1px);background-size:48px 12px"></div>
<div style="left:100px;top:302px;width:22px;height:10px;background:#3f7d8b;border-top:1px solid #a6d8e0;border-left:1px solid #a6d8e0"><div style="left:17px;top:1px;width:4px;height:7.5px;background:#fff"></div></div>
<div style="left:148px;top:290px;width:22px;height:10px;background:#3f7d8b;border-top:1px solid #a6d8e0;border-left:1px solid #a6d8e0"><div style="left:17px;top:1px;width:4px;height:7.5px;background:#fff"></div></div>
<div style="left:196px;top:266px;width:22px;height:10px;background:#3f7d8b;border-top:1px solid #a6d8e0;border-left:1px solid #a6d8e0"><div style="left:17px;top:1px;width:4px;height:7.5px;background:#fff"></div></div>
<div style="left:244px;top:302px;width:22px;height:10px;background:#3f7d8b;border-top:1px solid #a6d8e0;border-left:1px solid #a6d8e0"><div style="left:17px;top:1px;width:4px;height:7.5px;background:#fff"></div></div>
<div style="left:292px;top:218px;width:22px;height:10px;background:#3f7d8b;border-top:1px solid #a6d8e0;border-left:1px solid #a6d8e0"><div style="left:17px;top:1px;width:4px;height:7.5px;background:#fff"></div></div>
<div style="left:316px;top:242px;width:22px;height:10px;background:#3f7d8b;border-top:1px solid #a6d8e0;border-left:1px solid #a6d8e0"><div style="left:17px;top:1px;width:4px;height:7.5px;background:#fff"></div></div>
<div style="left:340px;top:266px;width:22px;height:10px;background:#3f7d8b;border-top:1px solid #a6d8e0;border-left:1px solid #a6d8e0"><div style="left:17px;top:1px;width:4px;height:7.5px;background:#fff"></div></div>
<div style="left:388px;top:302px;width:22px;height:10px;background:#3f7d8b;border-top:1px solid #a6d8e0;border-left:1px solid #a6d8e0"><div style="left:17px;top:1px;width:4px;height:7.5px;background:#fff"></div></div>
<div style="left:436px;top:362px;width:22px;height:10px;background:#3f7d8b;border-top:1px solid #a6d8e0;border-left:1px solid #a6d8e0"><div style="left:17px;top:1px;width:4px;height:7.5px;background:#fff"></div></div>
<div style="left:484px;top:278px;width:22px;height:10px;background:#1a4ecc;border-top:1px solid #8fb0ff;border-left:1px solid #8fb0ff"><div style="left:17px;top:1px;width:4px;height:7.5px;background:#fff"></div></div>
<div style="left:532px;top:266px;width:22px;height:10px;background:#1a4ecc;border-top:1px solid #8fb0ff;border-left:1px solid #8fb0ff"><div style="left:17px;top:1px;width:4px;height:7.5px;background:#fff"></div></div>
<div style="left:580px;top:242px;width:22px;height:10px;background:#1a4ecc;border-top:1px solid #8fb0ff;border-left:1px solid #8fb0ff"><div style="left:17px;top:1px;width:4px;height:7.5px;background:#fff"></div></div>
<div style="left:628px;top:278px;width:22px;height:10px;background:#1a4ecc;border-top:1px solid #8fb0ff;border-left:1px solid #8fb0ff"><div style="left:17px;top:1px;width:4px;height:7.5px;background:#fff"></div></div>
<div style="left:676px;top:194px;width:22px;height:10px;background:#1a4ecc;border-top:1px solid #8fb0ff;border-left:1px solid #8fb0ff"><div style="left:17px;top:1px;width:4px;height:7.5px;background:#fff"></div></div>
<div style="left:700px;top:218px;width:22px;height:10px;background:#1a4ecc;border-top:1px solid #8fb0ff;border-left:1px solid #8fb0ff"><div style="left:17px;top:1px;width:4px;height:7.5px;background:#fff"></div></div>
<div style="left:724px;top:242px;width:22px;height:10px;background:#1a4ecc;border-top:1px solid #8fb0ff;border-left:1px solid #8fb0ff"><div style="left:17px;top:1px;width:4px;height:7.5px;background:#fff"></div></div>
<div style="left:772px;top:278px;width:22px;height:10px;background:#1a4ecc;border-top:1px solid #8fb0ff;border-left:1px solid #8fb0ff"><div style="left:17px;top:1px;width:4px;height:7.5px;background:#fff"></div></div>
<div style="left:820px;top:338px;width:22px;height:10px;background:#1a4ecc;border-top:1px solid #8fb0ff;border-left:1px solid #8fb0ff"><div style="left:17px;top:1px;width:4px;height:7.5px;background:#fff"></div></div>
<div style="left:35px;top:457px;width:1245px;height:7px;background:#454545"></div>
<div style="left:35px;top:464px;width:245px;height:110px;background:#000"></div>
<div style="left:33px;top:491px;width:66px;text-align:center;font-size:14.2px;color:#eeeeee;line-height:16px">Note<br>Volume:</div>
<div style="left:99px;top:464px;width:1px;height:94px;background:#6e6e6e"></div>
<div style="left:111px;top:464px;width:1px;height:94px;background:#6e6e6e"></div>
<div style="left:123px;top:464px;width:1px;height:94px;background:#6e6e6e"></div>
<div style="left:135px;top:464px;width:1px;height:94px;background:#6e6e6e"></div>
<div style="left:147px;top:464px;width:1px;height:94px;background:#6e6e6e"></div>
<div style="left:159px;top:464px;width:1px;height:94px;background:#6e6e6e"></div>
<div style="left:171px;top:464px;width:1px;height:94px;background:#6e6e6e"></div>
<div style="left:183px;top:464px;width:1px;height:94px;background:#6e6e6e"></div>
<div style="left:195px;top:464px;width:1px;height:94px;background:#6e6e6e"></div>
<div style="left:207px;top:464px;width:1px;height:94px;background:#6e6e6e"></div>
<div style="left:219px;top:464px;width:1px;height:94px;background:#6e6e6e"></div>
<div style="left:231px;top:464px;width:1px;height:94px;background:#6e6e6e"></div>
<div style="left:243px;top:464px;width:1px;height:94px;background:#6e6e6e"></div>
<div style="left:255px;top:464px;width:1px;height:94px;background:#6e6e6e"></div>
<div style="left:267px;top:464px;width:1px;height:94px;background:#6e6e6e"></div>
<div style="left:99px;top:515px;width:2px;height:43px;background:#3d9c4a"></div>
<div style="left:99px;top:510px;width:3px;height:5px;background:#a8bff0"></div>
<div style="left:146px;top:515px;width:3px;height:43px;background:#3d9c4a"></div>
<div style="left:145px;top:510px;width:5px;height:5px;background:#a8bff0"></div>
<div style="left:194px;top:515px;width:3px;height:43px;background:#3d9c4a"></div>
<div style="left:193px;top:510px;width:5px;height:5px;background:#a8bff0"></div>
<div style="left:242px;top:515px;width:3px;height:43px;background:#3d9c4a"></div>
<div style="left:241px;top:510px;width:5px;height:5px;background:#a8bff0"></div>
<div style="left:100px;top:558px;width:180px;height:16px;background:#2a2a2a"></div>
<div style="left:100px;top:559px;width:12px;height:14px;background:linear-gradient(#dedede,#bdbdbd)"><svg width="12" height="14" style="left:0;top:0"><path d="M8,4 V10 L3.5,7 Z" fill="#333"/></svg></div>
<div style="left:113px;top:559px;width:166px;height:14px;border-radius:2px;background:linear-gradient(#d4d4d4,#c6c6c6 40%,#a8a8a8)"></div>
<div style="left:35px;top:574px;width:245px;height:109px;background:#5a636e"></div>
<div style="left:35px;top:681px;width:245px;height:2px;background:#4a525b"></div>
<svg style="left:44px;top:577px;" width="32" height="97" viewBox="0 0 32 97"><rect x="0" y="0" width="32" height="97" fill="#66707b"/><rect x="2" y="92" width="28" height="4" fill="#5a636e"/><rect x="0.5" y="0.5" width="31" height="96" fill="none" stroke="#111" stroke-width="1"/><rect x="1" y="1" width="1" height="95" fill="#8792a0" fill-opacity="0.6"/><rect x="5" y="2" width="9" height="88" rx="1.5" fill="#151515"/><rect x="6" y="3" width="7" height="1" fill="#4a4540"/><rect x="6" y="5" width="7" height="1" fill="#4a4540"/><rect x="6" y="7" width="7" height="1" fill="#4a4540"/><rect x="6" y="9" width="7" height="1" fill="#4a4540"/><rect x="6" y="11" width="7" height="1" fill="#4a4540"/><rect x="6" y="13" width="7" height="1" fill="#4a4540"/><rect x="6" y="15" width="7" height="1" fill="#4a4540"/><rect x="6" y="17" width="7" height="1" fill="#4a4540"/><rect x="6" y="19" width="7" height="1" fill="#4a4540"/><rect x="6" y="21" width="7" height="1" fill="#4a4540"/><rect x="6" y="23" width="7" height="1" fill="#4a4540"/><rect x="6" y="25" width="7" height="1" fill="#4a4540"/><rect x="6" y="27" width="7" height="1" fill="#4a4540"/><rect x="6" y="29" width="7" height="1" fill="#4a4540"/><rect x="6" y="31" width="7" height="1" fill="#4a4540"/><rect x="6" y="33" width="7" height="1" fill="#4a4540"/><rect x="6" y="35" width="7" height="1" fill="#4a4540"/><rect x="6" y="37" width="7" height="1" fill="#4a4540"/><rect x="6" y="39" width="7" height="1" fill="#4a4540"/><rect x="6" y="41" width="7" height="1" fill="#4a4540"/><rect x="6" y="43" width="7" height="1" fill="#4a4540"/><rect x="6" y="45" width="7" height="1" fill="#4a4540"/><rect x="6" y="47" width="7" height="1" fill="#4a4540"/><rect x="6" y="49" width="7" height="1" fill="#4a4540"/><rect x="6" y="51" width="7" height="1" fill="#4a4540"/><rect x="6" y="53" width="7" height="1" fill="#4a4540"/><rect x="6" y="55" width="7" height="1" fill="#4a4540"/><rect x="6" y="57" width="7" height="1" fill="#4a4540"/><rect x="6" y="59" width="7" height="1" fill="#4a4540"/><rect x="6" y="61" width="7" height="1" fill="#4a4540"/><rect x="6" y="63" width="7" height="1" fill="#4a4540"/><rect x="6" y="65" width="7" height="1" fill="#4a4540"/><rect x="6" y="67" width="7" height="1" fill="#4a4540"/><rect x="6" y="69" width="7" height="1" fill="#4a4540"/><rect x="6" y="71" width="7" height="1" fill="#4a4540"/><rect x="6" y="73" width="7" height="1" fill="#4a4540"/><rect x="6" y="75" width="7" height="1" fill="#4a4540"/><rect x="6" y="77" width="7" height="1" fill="#4a4540"/><rect x="6" y="79" width="7" height="1" fill="#4a4540"/><rect x="6" y="81" width="7" height="1" fill="#4a4540"/><rect x="6" y="83" width="7" height="1" fill="#4a4540"/><rect x="6" y="85" width="7" height="1" fill="#4a4540"/><rect x="6" y="87" width="7" height="1" fill="#4a4540"/><rect x="6" y="89" width="7" height="1" fill="#4a4540"/><rect x="17" y="2" width="9" height="88" rx="1.5" fill="#151515"/><rect x="18" y="3" width="7" height="1" fill="#4a4540"/><rect x="18" y="5" width="7" height="1" fill="#4a4540"/><rect x="18" y="7" width="7" height="1" fill="#4a4540"/><rect x="18" y="9" width="7" height="1" fill="#4a4540"/><rect x="18" y="11" width="7" height="1" fill="#4a4540"/><rect x="18" y="13" width="7" height="1" fill="#4a4540"/><rect x="18" y="15" width="7" height="1" fill="#4a4540"/><rect x="18" y="17" width="7" height="1" fill="#4a4540"/><rect x="18" y="19" width="7" height="1" fill="#4a4540"/><rect x="18" y="21" width="7" height="1" fill="#4a4540"/><rect x="18" y="23" width="7" height="1" fill="#4a4540"/><rect x="18" y="25" width="7" height="1" fill="#4a4540"/><rect x="18" y="27" width="7" height="1" fill="#4a4540"/><rect x="18" y="29" width="7" height="1" fill="#4a4540"/><rect x="18" y="31" width="7" height="1" fill="#4a4540"/><rect x="18" y="33" width="7" height="1" fill="#4a4540"/><rect x="18" y="35" width="7" height="1" fill="#4a4540"/><rect x="18" y="37" width="7" height="1" fill="#4a4540"/><rect x="18" y="39" width="7" height="1" fill="#4a4540"/><rect x="18" y="41" width="7" height="1" fill="#4a4540"/><rect x="18" y="43" width="7" height="1" fill="#4a4540"/><rect x="18" y="45" width="7" height="1" fill="#4a4540"/><rect x="18" y="47" width="7" height="1" fill="#4a4540"/><rect x="18" y="49" width="7" height="1" fill="#4a4540"/><rect x="18" y="51" width="7" height="1" fill="#4a4540"/><rect x="18" y="53" width="7" height="1" fill="#4a4540"/><rect x="18" y="55" width="7" height="1" fill="#4a4540"/><rect x="18" y="57" width="7" height="1" fill="#4a4540"/><rect x="18" y="59" width="7" height="1" fill="#4a4540"/><rect x="18" y="61" width="7" height="1" fill="#4a4540"/><rect x="18" y="63" width="7" height="1" fill="#4a4540"/><rect x="18" y="65" width="7" height="1" fill="#4a4540"/><rect x="18" y="67" width="7" height="1" fill="#4a4540"/><rect x="18" y="69" width="7" height="1" fill="#4a4540"/><rect x="18" y="71" width="7" height="1" fill="#4a4540"/><rect x="18" y="73" width="7" height="1" fill="#4a4540"/><rect x="18" y="75" width="7" height="1" fill="#4a4540"/><rect x="18" y="77" width="7" height="1" fill="#4a4540"/><rect x="18" y="79" width="7" height="1" fill="#4a4540"/><rect x="18" y="81" width="7" height="1" fill="#4a4540"/><rect x="18" y="83" width="7" height="1" fill="#4a4540"/><rect x="18" y="85" width="7" height="1" fill="#4a4540"/><rect x="18" y="87" width="7" height="1" fill="#4a4540"/><rect x="18" y="89" width="7" height="1" fill="#4a4540"/><rect x="14.3" y="2" width="0.8" height="88" fill="#b8bec4"/><rect x="16" y="2" width="0.8" height="88" fill="#9aa0a6"/><rect x="10" y="20" width="11" height="28" rx="1.5" fill="url(#gFader)" stroke="#333" stroke-width="0.8"/><rect x="11" y="24.0" width="9" height="1" fill="#ddd" fill-opacity="0.7"/><rect x="11" y="27.5" width="9" height="1" fill="#ddd" fill-opacity="0.7"/><rect x="11" y="31.0" width="9" height="1" fill="#ddd" fill-opacity="0.7"/><rect x="11" y="34.5" width="9" height="1" fill="#ddd" fill-opacity="0.7"/><rect x="11" y="38.0" width="9" height="1" fill="#ddd" fill-opacity="0.7"/><rect x="11" y="41.5" width="9" height="1" fill="#ddd" fill-opacity="0.7"/></svg>
<svg style="left:113px;top:577px;" width="32" height="97" viewBox="0 0 32 97"><rect x="0" y="0" width="32" height="97" fill="#66707b"/><rect x="2" y="92" width="28" height="4" fill="#5a636e"/><rect x="1" y="1" width="1" height="95" fill="#8792a0" fill-opacity="0.6"/><rect x="5" y="2" width="9" height="88" rx="1.5" fill="#151515"/><rect x="6" y="3" width="7" height="1" fill="#4a4540"/><rect x="6" y="5" width="7" height="1" fill="#4a4540"/><rect x="6" y="7" width="7" height="1" fill="#4a4540"/><rect x="6" y="9" width="7" height="1" fill="#4a4540"/><rect x="6" y="11" width="7" height="1" fill="#4a4540"/><rect x="6" y="13" width="7" height="1" fill="#4a4540"/><rect x="6" y="15" width="7" height="1" fill="#4a4540"/><rect x="6" y="17" width="7" height="1" fill="#4a4540"/><rect x="6" y="19" width="7" height="1" fill="#4a4540"/><rect x="6" y="21" width="7" height="1" fill="#4a4540"/><rect x="6" y="23" width="7" height="1" fill="#4a4540"/><rect x="6" y="25" width="7" height="1" fill="#4a4540"/><rect x="6" y="27" width="7" height="1" fill="#4a4540"/><rect x="6" y="29" width="7" height="1" fill="#4a4540"/><rect x="6" y="31" width="7" height="1" fill="#4a4540"/><rect x="6" y="33" width="7" height="1" fill="#4a4540"/><rect x="6" y="35" width="7" height="1" fill="#4a4540"/><rect x="6" y="37" width="7" height="1" fill="#4a4540"/><rect x="6" y="39" width="7" height="1" fill="#4a4540"/><rect x="6" y="41" width="7" height="1" fill="#4a4540"/><rect x="6" y="43" width="7" height="1" fill="#4a4540"/><rect x="6" y="45" width="7" height="1" fill="#4a4540"/><rect x="6" y="47" width="7" height="1" fill="#4a4540"/><rect x="6" y="49" width="7" height="1" fill="#4a4540"/><rect x="6" y="51" width="7" height="1" fill="#4a4540"/><rect x="6" y="53" width="7" height="1" fill="#4a4540"/><rect x="6" y="55" width="7" height="1" fill="#4a4540"/><rect x="6" y="57" width="7" height="1" fill="#4a4540"/><rect x="6" y="59" width="7" height="1" fill="#4a4540"/><rect x="6" y="61" width="7" height="1" fill="#4a4540"/><rect x="6" y="63" width="7" height="1" fill="#4a4540"/><rect x="6" y="65" width="7" height="1" fill="#4a4540"/><rect x="6" y="67" width="7" height="1" fill="#4a4540"/><rect x="6" y="69" width="7" height="1" fill="#4a4540"/><rect x="6" y="71" width="7" height="1" fill="#4a4540"/><rect x="6" y="73" width="7" height="1" fill="#4a4540"/><rect x="6" y="75" width="7" height="1" fill="#4a4540"/><rect x="6" y="77" width="7" height="1" fill="#4a4540"/><rect x="6" y="79" width="7" height="1" fill="#4a4540"/><rect x="6" y="81" width="7" height="1" fill="#4a4540"/><rect x="6" y="83" width="7" height="1" fill="#4a4540"/><rect x="6" y="85" width="7" height="1" fill="#4a4540"/><rect x="6" y="87" width="7" height="1" fill="#4a4540"/><rect x="6" y="89" width="7" height="1" fill="#4a4540"/><rect x="17" y="2" width="9" height="88" rx="1.5" fill="#151515"/><rect x="18" y="3" width="7" height="1" fill="#4a4540"/><rect x="18" y="5" width="7" height="1" fill="#4a4540"/><rect x="18" y="7" width="7" height="1" fill="#4a4540"/><rect x="18" y="9" width="7" height="1" fill="#4a4540"/><rect x="18" y="11" width="7" height="1" fill="#4a4540"/><rect x="18" y="13" width="7" height="1" fill="#4a4540"/><rect x="18" y="15" width="7" height="1" fill="#4a4540"/><rect x="18" y="17" width="7" height="1" fill="#4a4540"/><rect x="18" y="19" width="7" height="1" fill="#4a4540"/><rect x="18" y="21" width="7" height="1" fill="#4a4540"/><rect x="18" y="23" width="7" height="1" fill="#4a4540"/><rect x="18" y="25" width="7" height="1" fill="#4a4540"/><rect x="18" y="27" width="7" height="1" fill="#4a4540"/><rect x="18" y="29" width="7" height="1" fill="#4a4540"/><rect x="18" y="31" width="7" height="1" fill="#4a4540"/><rect x="18" y="33" width="7" height="1" fill="#4a4540"/><rect x="18" y="35" width="7" height="1" fill="#4a4540"/><rect x="18" y="37" width="7" height="1" fill="#4a4540"/><rect x="18" y="39" width="7" height="1" fill="#4a4540"/><rect x="18" y="41" width="7" height="1" fill="#4a4540"/><rect x="18" y="43" width="7" height="1" fill="#4a4540"/><rect x="18" y="45" width="7" height="1" fill="#4a4540"/><rect x="18" y="47" width="7" height="1" fill="#4a4540"/><rect x="18" y="49" width="7" height="1" fill="#4a4540"/><rect x="18" y="51" width="7" height="1" fill="#4a4540"/><rect x="18" y="53" width="7" height="1" fill="#4a4540"/><rect x="18" y="55" width="7" height="1" fill="#4a4540"/><rect x="18" y="57" width="7" height="1" fill="#4a4540"/><rect x="18" y="59" width="7" height="1" fill="#4a4540"/><rect x="18" y="61" width="7" height="1" fill="#4a4540"/><rect x="18" y="63" width="7" height="1" fill="#4a4540"/><rect x="18" y="65" width="7" height="1" fill="#4a4540"/><rect x="18" y="67" width="7" height="1" fill="#4a4540"/><rect x="18" y="69" width="7" height="1" fill="#4a4540"/><rect x="18" y="71" width="7" height="1" fill="#4a4540"/><rect x="18" y="73" width="7" height="1" fill="#4a4540"/><rect x="18" y="75" width="7" height="1" fill="#4a4540"/><rect x="18" y="77" width="7" height="1" fill="#4a4540"/><rect x="18" y="79" width="7" height="1" fill="#4a4540"/><rect x="18" y="81" width="7" height="1" fill="#4a4540"/><rect x="18" y="83" width="7" height="1" fill="#4a4540"/><rect x="18" y="85" width="7" height="1" fill="#4a4540"/><rect x="18" y="87" width="7" height="1" fill="#4a4540"/><rect x="18" y="89" width="7" height="1" fill="#4a4540"/><rect x="14.3" y="2" width="0.8" height="88" fill="#b8bec4"/><rect x="16" y="2" width="0.8" height="88" fill="#9aa0a6"/><rect x="10" y="32" width="11" height="28" rx="1.5" fill="url(#gFader)" stroke="#333" stroke-width="0.8"/><rect x="11" y="36.0" width="9" height="1" fill="#ddd" fill-opacity="0.7"/><rect x="11" y="39.5" width="9" height="1" fill="#ddd" fill-opacity="0.7"/><rect x="11" y="43.0" width="9" height="1" fill="#ddd" fill-opacity="0.7"/><rect x="11" y="46.5" width="9" height="1" fill="#ddd" fill-opacity="0.7"/><rect x="11" y="50.0" width="9" height="1" fill="#ddd" fill-opacity="0.7"/><rect x="11" y="53.5" width="9" height="1" fill="#ddd" fill-opacity="0.7"/></svg>
<svg style="left:146px;top:577px;" width="32" height="97" viewBox="0 0 32 97"><rect x="0" y="0" width="32" height="97" fill="#66707b"/><rect x="2" y="92" width="28" height="4" fill="#5a636e"/><rect x="1" y="1" width="1" height="95" fill="#8792a0" fill-opacity="0.6"/><rect x="5" y="2" width="9" height="88" rx="1.5" fill="#151515"/><rect x="6" y="3" width="7" height="1" fill="#4a4540"/><rect x="6" y="5" width="7" height="1" fill="#4a4540"/><rect x="6" y="7" width="7" height="1" fill="#4a4540"/><rect x="6" y="9" width="7" height="1" fill="#4a4540"/><rect x="6" y="11" width="7" height="1" fill="#4a4540"/><rect x="6" y="13" width="7" height="1" fill="#4a4540"/><rect x="6" y="15" width="7" height="1" fill="#4a4540"/><rect x="6" y="17" width="7" height="1" fill="#4a4540"/><rect x="6" y="19" width="7" height="1" fill="#4a4540"/><rect x="6" y="21" width="7" height="1" fill="#4a4540"/><rect x="6" y="23" width="7" height="1" fill="#4a4540"/><rect x="6" y="25" width="7" height="1" fill="#4a4540"/><rect x="6" y="27" width="7" height="1" fill="#4a4540"/><rect x="6" y="29" width="7" height="1" fill="#4a4540"/><rect x="6" y="31" width="7" height="1" fill="#4a4540"/><rect x="6" y="33" width="7" height="1" fill="#4a4540"/><rect x="6" y="35" width="7" height="1" fill="#4a4540"/><rect x="6" y="37" width="7" height="1" fill="#4a4540"/><rect x="6" y="39" width="7" height="1" fill="#4a4540"/><rect x="6" y="41" width="7" height="1" fill="#4a4540"/><rect x="6" y="43" width="7" height="1" fill="#4a4540"/><rect x="6" y="45" width="7" height="1" fill="#4a4540"/><rect x="6" y="47" width="7" height="1" fill="#4a4540"/><rect x="6" y="49" width="7" height="1" fill="#4a4540"/><rect x="6" y="51" width="7" height="1" fill="#4a4540"/><rect x="6" y="53" width="7" height="1" fill="#4a4540"/><rect x="6" y="55" width="7" height="1" fill="#4a4540"/><rect x="6" y="57" width="7" height="1" fill="#4a4540"/><rect x="6" y="59" width="7" height="1" fill="#4a4540"/><rect x="6" y="61" width="7" height="1" fill="#4a4540"/><rect x="6" y="63" width="7" height="1" fill="#4a4540"/><rect x="6" y="65" width="7" height="1" fill="#4a4540"/><rect x="6" y="67" width="7" height="1" fill="#4a4540"/><rect x="6" y="69" width="7" height="1" fill="#4a4540"/><rect x="6" y="71" width="7" height="1" fill="#4a4540"/><rect x="6" y="73" width="7" height="1" fill="#4a4540"/><rect x="6" y="75" width="7" height="1" fill="#4a4540"/><rect x="6" y="77" width="7" height="1" fill="#4a4540"/><rect x="6" y="79" width="7" height="1" fill="#4a4540"/><rect x="6" y="81" width="7" height="1" fill="#4a4540"/><rect x="6" y="83" width="7" height="1" fill="#4a4540"/><rect x="6" y="85" width="7" height="1" fill="#4a4540"/><rect x="6" y="87" width="7" height="1" fill="#4a4540"/><rect x="6" y="89" width="7" height="1" fill="#4a4540"/><rect x="17" y="2" width="9" height="88" rx="1.5" fill="#151515"/><rect x="18" y="3" width="7" height="1" fill="#4a4540"/><rect x="18" y="5" width="7" height="1" fill="#4a4540"/><rect x="18" y="7" width="7" height="1" fill="#4a4540"/><rect x="18" y="9" width="7" height="1" fill="#4a4540"/><rect x="18" y="11" width="7" height="1" fill="#4a4540"/><rect x="18" y="13" width="7" height="1" fill="#4a4540"/><rect x="18" y="15" width="7" height="1" fill="#4a4540"/><rect x="18" y="17" width="7" height="1" fill="#4a4540"/><rect x="18" y="19" width="7" height="1" fill="#4a4540"/><rect x="18" y="21" width="7" height="1" fill="#4a4540"/><rect x="18" y="23" width="7" height="1" fill="#4a4540"/><rect x="18" y="25" width="7" height="1" fill="#4a4540"/><rect x="18" y="27" width="7" height="1" fill="#4a4540"/><rect x="18" y="29" width="7" height="1" fill="#4a4540"/><rect x="18" y="31" width="7" height="1" fill="#4a4540"/><rect x="18" y="33" width="7" height="1" fill="#4a4540"/><rect x="18" y="35" width="7" height="1" fill="#4a4540"/><rect x="18" y="37" width="7" height="1" fill="#4a4540"/><rect x="18" y="39" width="7" height="1" fill="#4a4540"/><rect x="18" y="41" width="7" height="1" fill="#4a4540"/><rect x="18" y="43" width="7" height="1" fill="#4a4540"/><rect x="18" y="45" width="7" height="1" fill="#4a4540"/><rect x="18" y="47" width="7" height="1" fill="#4a4540"/><rect x="18" y="49" width="7" height="1" fill="#4a4540"/><rect x="18" y="51" width="7" height="1" fill="#4a4540"/><rect x="18" y="53" width="7" height="1" fill="#4a4540"/><rect x="18" y="55" width="7" height="1" fill="#4a4540"/><rect x="18" y="57" width="7" height="1" fill="#4a4540"/><rect x="18" y="59" width="7" height="1" fill="#4a4540"/><rect x="18" y="61" width="7" height="1" fill="#4a4540"/><rect x="18" y="63" width="7" height="1" fill="#4a4540"/><rect x="18" y="65" width="7" height="1" fill="#4a4540"/><rect x="18" y="67" width="7" height="1" fill="#4a4540"/><rect x="18" y="69" width="7" height="1" fill="#4a4540"/><rect x="18" y="71" width="7" height="1" fill="#4a4540"/><rect x="18" y="73" width="7" height="1" fill="#4a4540"/><rect x="18" y="75" width="7" height="1" fill="#4a4540"/><rect x="18" y="77" width="7" height="1" fill="#4a4540"/><rect x="18" y="79" width="7" height="1" fill="#4a4540"/><rect x="18" y="81" width="7" height="1" fill="#4a4540"/><rect x="18" y="83" width="7" height="1" fill="#4a4540"/><rect x="18" y="85" width="7" height="1" fill="#4a4540"/><rect x="18" y="87" width="7" height="1" fill="#4a4540"/><rect x="18" y="89" width="7" height="1" fill="#4a4540"/><rect x="14.3" y="2" width="0.8" height="88" fill="#b8bec4"/><rect x="16" y="2" width="0.8" height="88" fill="#9aa0a6"/><rect x="10" y="27" width="11" height="28" rx="1.5" fill="url(#gFader)" stroke="#333" stroke-width="0.8"/><rect x="11" y="31.0" width="9" height="1" fill="#ddd" fill-opacity="0.7"/><rect x="11" y="34.5" width="9" height="1" fill="#ddd" fill-opacity="0.7"/><rect x="11" y="38.0" width="9" height="1" fill="#ddd" fill-opacity="0.7"/><rect x="11" y="41.5" width="9" height="1" fill="#ddd" fill-opacity="0.7"/><rect x="11" y="45.0" width="9" height="1" fill="#ddd" fill-opacity="0.7"/><rect x="11" y="48.5" width="9" height="1" fill="#ddd" fill-opacity="0.7"/></svg>
<svg style="left:179px;top:577px;" width="32" height="97" viewBox="0 0 32 97"><rect x="0" y="0" width="32" height="97" fill="#66707b"/><rect x="2" y="92" width="28" height="4" fill="#5a636e"/><rect x="1" y="1" width="1" height="95" fill="#8792a0" fill-opacity="0.6"/><rect x="5" y="2" width="9" height="88" rx="1.5" fill="#151515"/><rect x="6" y="3" width="7" height="1" fill="#4a4540"/><rect x="6" y="5" width="7" height="1" fill="#4a4540"/><rect x="6" y="7" width="7" height="1" fill="#4a4540"/><rect x="6" y="9" width="7" height="1" fill="#4a4540"/><rect x="6" y="11" width="7" height="1" fill="#4a4540"/><rect x="6" y="13" width="7" height="1" fill="#4a4540"/><rect x="6" y="15" width="7" height="1" fill="#4a4540"/><rect x="6" y="17" width="7" height="1" fill="#4a4540"/><rect x="6" y="19" width="7" height="1" fill="#4a4540"/><rect x="6" y="21" width="7" height="1" fill="#4a4540"/><rect x="6" y="23" width="7" height="1" fill="#4a4540"/><rect x="6" y="25" width="7" height="1" fill="#4a4540"/><rect x="6" y="27" width="7" height="1" fill="#4a4540"/><rect x="6" y="29" width="7" height="1" fill="#4a4540"/><rect x="6" y="31" width="7" height="1" fill="#4a4540"/><rect x="6" y="33" width="7" height="1" fill="#4a4540"/><rect x="6" y="35" width="7" height="1" fill="#4a4540"/><rect x="6" y="37" width="7" height="1" fill="#4a4540"/><rect x="6" y="39" width="7" height="1" fill="#4a4540"/><rect x="6" y="41" width="7" height="1" fill="#4a4540"/><rect x="6" y="43" width="7" height="1" fill="#4a4540"/><rect x="6" y="45" width="7" height="1" fill="#4a4540"/><rect x="6" y="47" width="7" height="1" fill="#4a4540"/><rect x="6" y="49" width="7" height="1" fill="#4a4540"/><rect x="6" y="51" width="7" height="1" fill="#4a4540"/><rect x="6" y="53" width="7" height="1" fill="#4a4540"/><rect x="6" y="55" width="7" height="1" fill="#4a4540"/><rect x="6" y="57" width="7" height="1" fill="#4a4540"/><rect x="6" y="59" width="7" height="1" fill="#4a4540"/><rect x="6" y="61" width="7" height="1" fill="#4a4540"/><rect x="6" y="63" width="7" height="1" fill="#4a4540"/><rect x="6" y="65" width="7" height="1" fill="#4a4540"/><rect x="6" y="67" width="7" height="1" fill="#4a4540"/><rect x="6" y="69" width="7" height="1" fill="#4a4540"/><rect x="6" y="71" width="7" height="1" fill="#4a4540"/><rect x="6" y="73" width="7" height="1" fill="#4a4540"/><rect x="6" y="75" width="7" height="1" fill="#4a4540"/><rect x="6" y="77" width="7" height="1" fill="#4a4540"/><rect x="6" y="79" width="7" height="1" fill="#4a4540"/><rect x="6" y="81" width="7" height="1" fill="#4a4540"/><rect x="6" y="83" width="7" height="1" fill="#4a4540"/><rect x="6" y="85" width="7" height="1" fill="#4a4540"/><rect x="6" y="87" width="7" height="1" fill="#4a4540"/><rect x="6" y="89" width="7" height="1" fill="#4a4540"/><rect x="17" y="2" width="9" height="88" rx="1.5" fill="#151515"/><rect x="18" y="3" width="7" height="1" fill="#4a4540"/><rect x="18" y="5" width="7" height="1" fill="#4a4540"/><rect x="18" y="7" width="7" height="1" fill="#4a4540"/><rect x="18" y="9" width="7" height="1" fill="#4a4540"/><rect x="18" y="11" width="7" height="1" fill="#4a4540"/><rect x="18" y="13" width="7" height="1" fill="#4a4540"/><rect x="18" y="15" width="7" height="1" fill="#4a4540"/><rect x="18" y="17" width="7" height="1" fill="#4a4540"/><rect x="18" y="19" width="7" height="1" fill="#4a4540"/><rect x="18" y="21" width="7" height="1" fill="#4a4540"/><rect x="18" y="23" width="7" height="1" fill="#4a4540"/><rect x="18" y="25" width="7" height="1" fill="#4a4540"/><rect x="18" y="27" width="7" height="1" fill="#4a4540"/><rect x="18" y="29" width="7" height="1" fill="#4a4540"/><rect x="18" y="31" width="7" height="1" fill="#4a4540"/><rect x="18" y="33" width="7" height="1" fill="#4a4540"/><rect x="18" y="35" width="7" height="1" fill="#4a4540"/><rect x="18" y="37" width="7" height="1" fill="#4a4540"/><rect x="18" y="39" width="7" height="1" fill="#4a4540"/><rect x="18" y="41" width="7" height="1" fill="#4a4540"/><rect x="18" y="43" width="7" height="1" fill="#4a4540"/><rect x="18" y="45" width="7" height="1" fill="#4a4540"/><rect x="18" y="47" width="7" height="1" fill="#4a4540"/><rect x="18" y="49" width="7" height="1" fill="#4a4540"/><rect x="18" y="51" width="7" height="1" fill="#4a4540"/><rect x="18" y="53" width="7" height="1" fill="#4a4540"/><rect x="18" y="55" width="7" height="1" fill="#4a4540"/><rect x="18" y="57" width="7" height="1" fill="#4a4540"/><rect x="18" y="59" width="7" height="1" fill="#4a4540"/><rect x="18" y="61" width="7" height="1" fill="#4a4540"/><rect x="18" y="63" width="7" height="1" fill="#4a4540"/><rect x="18" y="65" width="7" height="1" fill="#4a4540"/><rect x="18" y="67" width="7" height="1" fill="#4a4540"/><rect x="18" y="69" width="7" height="1" fill="#4a4540"/><rect x="18" y="71" width="7" height="1" fill="#4a4540"/><rect x="18" y="73" width="7" height="1" fill="#4a4540"/><rect x="18" y="75" width="7" height="1" fill="#4a4540"/><rect x="18" y="77" width="7" height="1" fill="#4a4540"/><rect x="18" y="79" width="7" height="1" fill="#4a4540"/><rect x="18" y="81" width="7" height="1" fill="#4a4540"/><rect x="18" y="83" width="7" height="1" fill="#4a4540"/><rect x="18" y="85" width="7" height="1" fill="#4a4540"/><rect x="18" y="87" width="7" height="1" fill="#4a4540"/><rect x="18" y="89" width="7" height="1" fill="#4a4540"/><rect x="14.3" y="2" width="0.8" height="88" fill="#b8bec4"/><rect x="16" y="2" width="0.8" height="88" fill="#9aa0a6"/><rect x="10" y="40" width="11" height="28" rx="1.5" fill="url(#gFader)" stroke="#333" stroke-width="0.8"/><rect x="11" y="44.0" width="9" height="1" fill="#ddd" fill-opacity="0.7"/><rect x="11" y="47.5" width="9" height="1" fill="#ddd" fill-opacity="0.7"/><rect x="11" y="51.0" width="9" height="1" fill="#ddd" fill-opacity="0.7"/><rect x="11" y="54.5" width="9" height="1" fill="#ddd" fill-opacity="0.7"/><rect x="11" y="58.0" width="9" height="1" fill="#ddd" fill-opacity="0.7"/><rect x="11" y="61.5" width="9" height="1" fill="#ddd" fill-opacity="0.7"/></svg>
<svg style="left:212px;top:577px;" width="32" height="97" viewBox="0 0 32 97"><rect x="0" y="0" width="32" height="97" fill="#66707b"/><rect x="2" y="92" width="28" height="4" fill="#5a636e"/><rect x="1" y="1" width="1" height="95" fill="#8792a0" fill-opacity="0.6"/><rect x="5" y="2" width="9" height="88" rx="1.5" fill="#151515"/><rect x="6" y="3" width="7" height="1" fill="#4a4540"/><rect x="6" y="5" width="7" height="1" fill="#4a4540"/><rect x="6" y="7" width="7" height="1" fill="#4a4540"/><rect x="6" y="9" width="7" height="1" fill="#4a4540"/><rect x="6" y="11" width="7" height="1" fill="#4a4540"/><rect x="6" y="13" width="7" height="1" fill="#4a4540"/><rect x="6" y="15" width="7" height="1" fill="#4a4540"/><rect x="6" y="17" width="7" height="1" fill="#4a4540"/><rect x="6" y="19" width="7" height="1" fill="#4a4540"/><rect x="6" y="21" width="7" height="1" fill="#4a4540"/><rect x="6" y="23" width="7" height="1" fill="#4a4540"/><rect x="6" y="25" width="7" height="1" fill="#4a4540"/><rect x="6" y="27" width="7" height="1" fill="#4a4540"/><rect x="6" y="29" width="7" height="1" fill="#4a4540"/><rect x="6" y="31" width="7" height="1" fill="#4a4540"/><rect x="6" y="33" width="7" height="1" fill="#4a4540"/><rect x="6" y="35" width="7" height="1" fill="#4a4540"/><rect x="6" y="37" width="7" height="1" fill="#4a4540"/><rect x="6" y="39" width="7" height="1" fill="#4a4540"/><rect x="6" y="41" width="7" height="1" fill="#4a4540"/><rect x="6" y="43" width="7" height="1" fill="#4a4540"/><rect x="6" y="45" width="7" height="1" fill="#4a4540"/><rect x="6" y="47" width="7" height="1" fill="#4a4540"/><rect x="6" y="49" width="7" height="1" fill="#4a4540"/><rect x="6" y="51" width="7" height="1" fill="#4a4540"/><rect x="6" y="53" width="7" height="1" fill="#4a4540"/><rect x="6" y="55" width="7" height="1" fill="#4a4540"/><rect x="6" y="57" width="7" height="1" fill="#4a4540"/><rect x="6" y="59" width="7" height="1" fill="#4a4540"/><rect x="6" y="61" width="7" height="1" fill="#4a4540"/><rect x="6" y="63" width="7" height="1" fill="#4a4540"/><rect x="6" y="65" width="7" height="1" fill="#4a4540"/><rect x="6" y="67" width="7" height="1" fill="#4a4540"/><rect x="6" y="69" width="7" height="1" fill="#4a4540"/><rect x="6" y="71" width="7" height="1" fill="#4a4540"/><rect x="6" y="73" width="7" height="1" fill="#4a4540"/><rect x="6" y="75" width="7" height="1" fill="#4a4540"/><rect x="6" y="77" width="7" height="1" fill="#4a4540"/><rect x="6" y="79" width="7" height="1" fill="#4a4540"/><rect x="6" y="81" width="7" height="1" fill="#4a4540"/><rect x="6" y="83" width="7" height="1" fill="#4a4540"/><rect x="6" y="85" width="7" height="1" fill="#4a4540"/><rect x="6" y="87" width="7" height="1" fill="#4a4540"/><rect x="6" y="89" width="7" height="1" fill="#4a4540"/><rect x="17" y="2" width="9" height="88" rx="1.5" fill="#151515"/><rect x="18" y="3" width="7" height="1" fill="#4a4540"/><rect x="18" y="5" width="7" height="1" fill="#4a4540"/><rect x="18" y="7" width="7" height="1" fill="#4a4540"/><rect x="18" y="9" width="7" height="1" fill="#4a4540"/><rect x="18" y="11" width="7" height="1" fill="#4a4540"/><rect x="18" y="13" width="7" height="1" fill="#4a4540"/><rect x="18" y="15" width="7" height="1" fill="#4a4540"/><rect x="18" y="17" width="7" height="1" fill="#4a4540"/><rect x="18" y="19" width="7" height="1" fill="#4a4540"/><rect x="18" y="21" width="7" height="1" fill="#4a4540"/><rect x="18" y="23" width="7" height="1" fill="#4a4540"/><rect x="18" y="25" width="7" height="1" fill="#4a4540"/><rect x="18" y="27" width="7" height="1" fill="#4a4540"/><rect x="18" y="29" width="7" height="1" fill="#4a4540"/><rect x="18" y="31" width="7" height="1" fill="#4a4540"/><rect x="18" y="33" width="7" height="1" fill="#4a4540"/><rect x="18" y="35" width="7" height="1" fill="#4a4540"/><rect x="18" y="37" width="7" height="1" fill="#4a4540"/><rect x="18" y="39" width="7" height="1" fill="#4a4540"/><rect x="18" y="41" width="7" height="1" fill="#4a4540"/><rect x="18" y="43" width="7" height="1" fill="#4a4540"/><rect x="18" y="45" width="7" height="1" fill="#4a4540"/><rect x="18" y="47" width="7" height="1" fill="#4a4540"/><rect x="18" y="49" width="7" height="1" fill="#4a4540"/><rect x="18" y="51" width="7" height="1" fill="#4a4540"/><rect x="18" y="53" width="7" height="1" fill="#4a4540"/><rect x="18" y="55" width="7" height="1" fill="#4a4540"/><rect x="18" y="57" width="7" height="1" fill="#4a4540"/><rect x="18" y="59" width="7" height="1" fill="#4a4540"/><rect x="18" y="61" width="7" height="1" fill="#4a4540"/><rect x="18" y="63" width="7" height="1" fill="#4a4540"/><rect x="18" y="65" width="7" height="1" fill="#4a4540"/><rect x="18" y="67" width="7" height="1" fill="#4a4540"/><rect x="18" y="69" width="7" height="1" fill="#4a4540"/><rect x="18" y="71" width="7" height="1" fill="#4a4540"/><rect x="18" y="73" width="7" height="1" fill="#4a4540"/><rect x="18" y="75" width="7" height="1" fill="#4a4540"/><rect x="18" y="77" width="7" height="1" fill="#4a4540"/><rect x="18" y="79" width="7" height="1" fill="#4a4540"/><rect x="18" y="81" width="7" height="1" fill="#4a4540"/><rect x="18" y="83" width="7" height="1" fill="#4a4540"/><rect x="18" y="85" width="7" height="1" fill="#4a4540"/><rect x="18" y="87" width="7" height="1" fill="#4a4540"/><rect x="18" y="89" width="7" height="1" fill="#4a4540"/><rect x="14.3" y="2" width="0.8" height="88" fill="#b8bec4"/><rect x="16" y="2" width="0.8" height="88" fill="#9aa0a6"/><rect x="10" y="44" width="11" height="28" rx="1.5" fill="url(#gFader)" stroke="#333" stroke-width="0.8"/><rect x="11" y="48.0" width="9" height="1" fill="#ddd" fill-opacity="0.7"/><rect x="11" y="51.5" width="9" height="1" fill="#ddd" fill-opacity="0.7"/><rect x="11" y="55.0" width="9" height="1" fill="#ddd" fill-opacity="0.7"/><rect x="11" y="58.5" width="9" height="1" fill="#ddd" fill-opacity="0.7"/><rect x="11" y="62.0" width="9" height="1" fill="#ddd" fill-opacity="0.7"/><rect x="11" y="65.5" width="9" height="1" fill="#ddd" fill-opacity="0.7"/></svg>
<svg style="left:245px;top:577px;" width="32" height="97" viewBox="0 0 32 97"><rect x="0" y="0" width="32" height="97" fill="#66707b"/><rect x="2" y="92" width="28" height="4" fill="#5a636e"/><rect x="1" y="1" width="1" height="95" fill="#8792a0" fill-opacity="0.6"/><rect x="5" y="2" width="9" height="88" rx="1.5" fill="#151515"/><rect x="6" y="3" width="7" height="1" fill="#4a4540"/><rect x="6" y="5" width="7" height="1" fill="#4a4540"/><rect x="6" y="7" width="7" height="1" fill="#4a4540"/><rect x="6" y="9" width="7" height="1" fill="#4a4540"/><rect x="6" y="11" width="7" height="1" fill="#4a4540"/><rect x="6" y="13" width="7" height="1" fill="#4a4540"/><rect x="6" y="15" width="7" height="1" fill="#4a4540"/><rect x="6" y="17" width="7" height="1" fill="#4a4540"/><rect x="6" y="19" width="7" height="1" fill="#4a4540"/><rect x="6" y="21" width="7" height="1" fill="#4a4540"/><rect x="6" y="23" width="7" height="1" fill="#4a4540"/><rect x="6" y="25" width="7" height="1" fill="#4a4540"/><rect x="6" y="27" width="7" height="1" fill="#4a4540"/><rect x="6" y="29" width="7" height="1" fill="#4a4540"/><rect x="6" y="31" width="7" height="1" fill="#4a4540"/><rect x="6" y="33" width="7" height="1" fill="#4a4540"/><rect x="6" y="35" width="7" height="1" fill="#4a4540"/><rect x="6" y="37" width="7" height="1" fill="#4a4540"/><rect x="6" y="39" width="7" height="1" fill="#4a4540"/><rect x="6" y="41" width="7" height="1" fill="#4a4540"/><rect x="6" y="43" width="7" height="1" fill="#4a4540"/><rect x="6" y="45" width="7" height="1" fill="#4a4540"/><rect x="6" y="47" width="7" height="1" fill="#4a4540"/><rect x="6" y="49" width="7" height="1" fill="#4a4540"/><rect x="6" y="51" width="7" height="1" fill="#4a4540"/><rect x="6" y="53" width="7" height="1" fill="#4a4540"/><rect x="6" y="55" width="7" height="1" fill="#4a4540"/><rect x="6" y="57" width="7" height="1" fill="#4a4540"/><rect x="6" y="59" width="7" height="1" fill="#4a4540"/><rect x="6" y="61" width="7" height="1" fill="#4a4540"/><rect x="6" y="63" width="7" height="1" fill="#4a4540"/><rect x="6" y="65" width="7" height="1" fill="#4a4540"/><rect x="6" y="67" width="7" height="1" fill="#4a4540"/><rect x="6" y="69" width="7" height="1" fill="#4a4540"/><rect x="6" y="71" width="7" height="1" fill="#4a4540"/><rect x="6" y="73" width="7" height="1" fill="#4a4540"/><rect x="6" y="75" width="7" height="1" fill="#4a4540"/><rect x="6" y="77" width="7" height="1" fill="#4a4540"/><rect x="6" y="79" width="7" height="1" fill="#4a4540"/><rect x="6" y="81" width="7" height="1" fill="#4a4540"/><rect x="6" y="83" width="7" height="1" fill="#4a4540"/><rect x="6" y="85" width="7" height="1" fill="#4a4540"/><rect x="6" y="87" width="7" height="1" fill="#4a4540"/><rect x="6" y="89" width="7" height="1" fill="#4a4540"/><rect x="17" y="2" width="9" height="88" rx="1.5" fill="#151515"/><rect x="18" y="3" width="7" height="1" fill="#4a4540"/><rect x="18" y="5" width="7" height="1" fill="#4a4540"/><rect x="18" y="7" width="7" height="1" fill="#4a4540"/><rect x="18" y="9" width="7" height="1" fill="#4a4540"/><rect x="18" y="11" width="7" height="1" fill="#4a4540"/><rect x="18" y="13" width="7" height="1" fill="#4a4540"/><rect x="18" y="15" width="7" height="1" fill="#4a4540"/><rect x="18" y="17" width="7" height="1" fill="#4a4540"/><rect x="18" y="19" width="7" height="1" fill="#4a4540"/><rect x="18" y="21" width="7" height="1" fill="#4a4540"/><rect x="18" y="23" width="7" height="1" fill="#4a4540"/><rect x="18" y="25" width="7" height="1" fill="#4a4540"/><rect x="18" y="27" width="7" height="1" fill="#4a4540"/><rect x="18" y="29" width="7" height="1" fill="#4a4540"/><rect x="18" y="31" width="7" height="1" fill="#4a4540"/><rect x="18" y="33" width="7" height="1" fill="#4a4540"/><rect x="18" y="35" width="7" height="1" fill="#4a4540"/><rect x="18" y="37" width="7" height="1" fill="#4a4540"/><rect x="18" y="39" width="7" height="1" fill="#4a4540"/><rect x="18" y="41" width="7" height="1" fill="#4a4540"/><rect x="18" y="43" width="7" height="1" fill="#4a4540"/><rect x="18" y="45" width="7" height="1" fill="#4a4540"/><rect x="18" y="47" width="7" height="1" fill="#4a4540"/><rect x="18" y="49" width="7" height="1" fill="#4a4540"/><rect x="18" y="51" width="7" height="1" fill="#4a4540"/><rect x="18" y="53" width="7" height="1" fill="#4a4540"/><rect x="18" y="55" width="7" height="1" fill="#4a4540"/><rect x="18" y="57" width="7" height="1" fill="#4a4540"/><rect x="18" y="59" width="7" height="1" fill="#4a4540"/><rect x="18" y="61" width="7" height="1" fill="#4a4540"/><rect x="18" y="63" width="7" height="1" fill="#4a4540"/><rect x="18" y="65" width="7" height="1" fill="#4a4540"/><rect x="18" y="67" width="7" height="1" fill="#4a4540"/><rect x="18" y="69" width="7" height="1" fill="#4a4540"/><rect x="18" y="71" width="7" height="1" fill="#4a4540"/><rect x="18" y="73" width="7" height="1" fill="#4a4540"/><rect x="18" y="75" width="7" height="1" fill="#4a4540"/><rect x="18" y="77" width="7" height="1" fill="#4a4540"/><rect x="18" y="79" width="7" height="1" fill="#4a4540"/><rect x="18" y="81" width="7" height="1" fill="#4a4540"/><rect x="18" y="83" width="7" height="1" fill="#4a4540"/><rect x="18" y="85" width="7" height="1" fill="#4a4540"/><rect x="18" y="87" width="7" height="1" fill="#4a4540"/><rect x="18" y="89" width="7" height="1" fill="#4a4540"/><rect x="14.3" y="2" width="0.8" height="88" fill="#b8bec4"/><rect x="16" y="2" width="0.8" height="88" fill="#9aa0a6"/><rect x="10" y="19" width="11" height="28" rx="1.5" fill="url(#gFader)" stroke="#333" stroke-width="0.8"/><rect x="11" y="23.0" width="9" height="1" fill="#ddd" fill-opacity="0.7"/><rect x="11" y="26.5" width="9" height="1" fill="#ddd" fill-opacity="0.7"/><rect x="11" y="30.0" width="9" height="1" fill="#ddd" fill-opacity="0.7"/><rect x="11" y="33.5" width="9" height="1" fill="#ddd" fill-opacity="0.7"/><rect x="11" y="37.0" width="9" height="1" fill="#ddd" fill-opacity="0.7"/><rect x="11" y="40.5" width="9" height="1" fill="#ddd" fill-opacity="0.7"/></svg>
<div style="left:87px;top:578px;width:20px;height:36px;border-radius:1px;background:linear-gradient(#c4c4c4,#b4b4b4);font-size:11.5px;color:#1a1a1a;text-align:center;line-height:17px">C</div>
<div style="left:87px;top:616px;width:20px;height:53px;border-radius:1px;background:radial-gradient(ellipse at 50% 40%,#dcdcdc,#bcbcbc);font-size:11.5px;color:#1a1a1a;text-align:center;line-height:52px">D</div>
<div style="left:30px;top:683px;width:250px;height:117px;background:#464646"></div>
<svg style="left:30px;top:683px;" width="250" height="117" viewBox="0 0 250 117"><rect x="5" y="13" width="24" height="5" fill="#434343"/><rect x="85" y="13" width="24" height="5" fill="#434343"/><rect x="165" y="13" width="24" height="5" fill="#434343"/><rect x="245" y="13" width="24" height="5" fill="#434343"/><path d="M48.5,45.5 A12,12 0 1,1 65.5,45.5" fill="none" stroke="#414141" stroke-width="2.5"/><rect x="45" y="53" width="24" height="5" fill="#434343"/><path d="M128.5,45.5 A12,12 0 1,1 145.5,45.5" fill="none" stroke="#414141" stroke-width="2.5"/><rect x="125" y="53" width="24" height="5" fill="#434343"/><path d="M208.5,45.5 A12,12 0 1,1 225.5,45.5" fill="none" stroke="#414141" stroke-width="2.5"/><rect x="205" y="53" width="24" height="5" fill="#434343"/><path d="M288.5,45.5 A12,12 0 1,1 305.5,45.5" fill="none" stroke="#414141" stroke-width="2.5"/><rect x="285" y="53" width="24" height="5" fill="#434343"/><path d="M8.5,85.5 A12,12 0 1,1 25.5,85.5" fill="none" stroke="#414141" stroke-width="2.5"/><rect x="5" y="93" width="24" height="5" fill="#434343"/><path d="M88.5,85.5 A12,12 0 1,1 105.5,85.5" fill="none" stroke="#414141" stroke-width="2.5"/><rect x="85" y="93" width="24" height="5" fill="#434343"/><path d="M168.5,85.5 A12,12 0 1,1 185.5,85.5" fill="none" stroke="#414141" stroke-width="2.5"/><rect x="165" y="93" width="24" height="5" fill="#434343"/><path d="M248.5,85.5 A12,12 0 1,1 265.5,85.5" fill="none" stroke="#414141" stroke-width="2.5"/><rect x="245" y="93" width="24" height="5" fill="#434343"/><path d="M48.5,125.5 A12,12 0 1,1 65.5,125.5" fill="none" stroke="#414141" stroke-width="2.5"/><rect x="45" y="133" width="24" height="5" fill="#434343"/><path d="M128.5,125.5 A12,12 0 1,1 145.5,125.5" fill="none" stroke="#414141" stroke-width="2.5"/><rect x="125" y="133" width="24" height="5" fill="#434343"/><path d="M208.5,125.5 A12,12 0 1,1 225.5,125.5" fill="none" stroke="#414141" stroke-width="2.5"/><rect x="205" y="133" width="24" height="5" fill="#434343"/><path d="M288.5,125.5 A12,12 0 1,1 305.5,125.5" fill="none" stroke="#414141" stroke-width="2.5"/><rect x="285" y="133" width="24" height="5" fill="#434343"/><path d="M8.5,165.5 A12,12 0 1,1 25.5,165.5" fill="none" stroke="#414141" stroke-width="2.5"/><rect x="5" y="173" width="24" height="5" fill="#434343"/><path d="M88.5,165.5 A12,12 0 1,1 105.5,165.5" fill="none" stroke="#414141" stroke-width="2.5"/><rect x="85" y="173" width="24" height="5" fill="#434343"/><path d="M168.5,165.5 A12,12 0 1,1 185.5,165.5" fill="none" stroke="#414141" stroke-width="2.5"/><rect x="165" y="173" width="24" height="5" fill="#434343"/><path d="M248.5,165.5 A12,12 0 1,1 265.5,165.5" fill="none" stroke="#414141" stroke-width="2.5"/><rect x="245" y="173" width="24" height="5" fill="#434343"/></svg>
<div style="left:280px;top:461px;width:1000px;height:339px;background:#5a6370"></div>
<div style="left:281px;top:461px;width:999px;height:23px;background:linear-gradient(#44548e,#5a6aa6);border-top:1px solid #9aa8cc"></div>
<svg style="left:285px;top:465px;" width="16" height="14" viewBox="0 0 16 14"><path d="M1,5 L5,1 L10,5 L15,3 V13 H1 Z" fill="url(#gLav)" stroke="#1f2a5a" stroke-width="1"/></svg>
<div style="left:616px;top:464px;font-size:13px;font-weight:bold;color:#f6f6f6;white-space:nowrap;line-height:16px;letter-spacing:0.66px">Automation Editor - Drag a control while pressing &lt;Ctrl&gt;</div>
<div style="left:283px;top:484px;width:997px;height:32px;background:linear-gradient(#9ba3a9,#838b91 50%,#6b7278);border-bottom:1px solid #596068"></div>
<div class="btn" style="left:289px;top:486px;width:28px;height:28px;border-radius:7px 3px 3px 7px"><svg width="28" height="28" viewBox="0 0 28 28" style="left:0;top:0"><path d="M7.5,7 L21.2,14 L7.5,21 Z" fill="url(#gDark2)" stroke="#111" stroke-width="0.9" stroke-linejoin="round"/></svg></div>
<div class="btn" style="left:319px;top:486px;width:28px;height:28px;border-radius:3px 7px 7px 3px"><svg width="28" height="28" viewBox="0 0 28 28" style="left:0;top:0"><rect x="7.3" y="7" width="14.2" height="14.2" fill="url(#gDark3)" stroke="#111" stroke-width="1"/></svg></div>
<div class="btn sel" style="left:358px;top:485px;width:29.5px;height:29.5px"><svg width="28" height="28" viewBox="0 0 28 28" style="left:-1px;top:-0.5px"><path d="M8,8 L23,23" stroke="#2a2a2a" stroke-width="4.6" stroke-linecap="round"/><path d="M8,8 L23,23" stroke="url(#gPen)" stroke-width="3.2" stroke-linecap="butt"/><path d="M5.5,5.5 L9.5,7 L7,9.5 Z" fill="#1a1a1a"/></svg></div>
<div class="btn" style="left:389px;top:486px;width:28px;height:28px;"><svg width="28" height="28" viewBox="0 0 28 28" style="left:0;top:0"><path d="M6,9.2 L12.2,4.3 L24.9,14.2 L24.9,17.3 L18.8,22.5 L6,12.3 Z" fill="#5a5e64" stroke="#111" stroke-width="1.1" stroke-linejoin="round"/><path d="M6,9.2 L12.2,4.3 L24.9,14.2 L18.8,19.3 Z" fill="url(#gErase)" stroke="#111" stroke-width="1.1" stroke-linejoin="round"/><path d="M18.8,19.3 V22.5" stroke="#111" stroke-width="1"/></svg></div>
<div class="btn" style="left:428px;top:486px;width:28px;height:28px;"><svg width="28" height="28" viewBox="0 0 28 28" style="left:0;top:0"><path d="M4.7,11 H11.2 V6.3 H17.8 V13.8 H23.4 V21.3 H4.7 Z" fill="url(#gLav)" stroke="#1f2a5a" stroke-width="1.5" stroke-linejoin="round"/></svg></div>
<div class="btn" style="left:458px;top:486px;width:28px;height:28px;"><svg width="28" height="28" viewBox="0 0 28 28" style="left:0;top:0"><path d="M4.6,10.1 L10.3,6.3 L16.9,13.8 L23.4,8.2 V21.3 H4.6 Z" fill="url(#gLav)" stroke="#1f2a5a" stroke-width="1.5" stroke-linejoin="round"/></svg></div>
<div class="btn sel" style="left:488px;top:485px;width:29.5px;height:29.5px"><svg width="28" height="28" viewBox="0 0 28 28" style="left:-1px;top:-0.5px"><path d="M4.6,21.5 V11 C6,7 8.5,6.5 10.5,7.8 C13,9.5 16,16 19.5,15.5 C22,15 22.5,11 23.4,9.1 V21.5 Z" fill="url(#gLav)" stroke="#1f2a5a" stroke-width="1.5" stroke-linejoin="round"/></svg></div>
<div style="left:523px;top:492px;font-size:13.5px;color:#e8ecf0;line-height:16px">Tension:</div>
<svg style="left:580px;top:488px;" width="22" height="22" viewBox="0 0 22 22"><circle cx="10.5" cy="10.8" r="8.3" fill="url(#gKnobDark)"/><path d="M4.6,16.7 A8.3,8.3 0 1,1 16.4,16.7" fill="none" stroke="#f4f4f4" stroke-width="2"/><path d="M10.5,10.8 L15,15.3" stroke="#f4f4f4" stroke-width="1.8" stroke-linecap="round"/></svg>
<div class="btn" style="left:611px;top:486px;width:28px;height:28px;"><svg width="28" height="28" viewBox="0 0 28 28" style="left:0;top:0"><path d="M6,3.5 L16.5,16.5 L13.5,17.5 Z" fill="#e0e0e0" stroke="#333" stroke-width="0.9" stroke-linejoin="round"/><path d="M22,3.5 L11.5,16.5 L14.5,17.5 Z" fill="#f0f0f0" stroke="#333" stroke-width="0.9" stroke-linejoin="round"/><circle cx="8.8" cy="19" r="3.6" fill="none" stroke="#111" stroke-width="2"/><circle cx="19.2" cy="19" r="3.6" fill="none" stroke="#111" stroke-width="2"/></svg></div>
<div class="btn" style="left:641px;top:486px;width:28px;height:28px;"><svg width="28" height="28" viewBox="0 0 28 28" style="left:0;top:0"><path d="M10,6.5 H21 V19.5 L17,23.5 H10 Z" fill="#f4f4f4" stroke="#888" stroke-width="0.8"/><path d="M7,4 H18 V17 L14,21 H7 Z" fill="url(#gPage)"/><path d="M18,4 V17 L14,21" fill="none" stroke="#999" stroke-width="0.9"/></svg></div>
<div class="btn" style="left:671px;top:486px;width:28px;height:28px;"><svg width="28" height="28" viewBox="0 0 28 28" style="left:0;top:0"><path d="M12,5 H22 V18 L17.5,22.5 H12 Z" fill="url(#gPage)" stroke="#999" stroke-width="0.8"/><path d="M5,11.5 H11 V8.5 L17,13.5 L11,18.5 V15.5 H5 Z" fill="url(#gGrayArr)" stroke="#111" stroke-width="1.2" stroke-linejoin="round"/></svg></div>
<div class="btn" style="left:711px;top:486px;width:28px;height:28px;"><svg width="28" height="28" viewBox="0 0 28 28" style="left:0;top:0"><path d="M6,11.8 H13.5 V8.8 L21.5,14.2 L13.5,19.6 V16.6 H6 Z" fill="url(#gGreen)" stroke="#0f5a22" stroke-width="0.9" stroke-linejoin="round"/></svg></div>
<div class="btn" style="left:741px;top:486px;width:28px;height:28px;"><svg width="28" height="28" viewBox="0 0 28 28" style="left:0;top:0"><path d="M6.2,7 L14.1,14 L6.2,21 Z M22.1,7 L14.1,14 L22.1,21 Z" fill="url(#gBow)" stroke="#333" stroke-width="0.8" stroke-linejoin="round"/></svg></div>
<div class="btn" style="left:771px;top:486px;width:28px;height:28px;"><svg width="28" height="28" viewBox="0 0 28 28" style="left:0;top:0"><rect x="5.3" y="8" width="1.9" height="11.5" fill="#1e1e1e"/><path d="M9,13.8 L15.5,9 V18.6 Z M15.5,13.8 L22,9 V18.6 Z" fill="#2a2a2a"/></svg></div>
<svg style="left:814px;top:488px;" width="24" height="24" viewBox="0 0 24 24"><path d="M15.5,15.5 L22,22.5" stroke="#3a4a54" stroke-width="2.4" stroke-linecap="round"/><circle cx="10" cy="9.5" r="7.6" fill="url(#gLens)" stroke="#3b6670" stroke-width="1.5"/><ellipse cx="8.5" cy="7.5" rx="3.5" ry="2.5" fill="#eef8fa" fill-opacity="0.6"/><path d="M6,9 H14 M6,9 l2,-2 M6,9 l2,2 M14,9 l-2,-2 M14,9 l-2,2" stroke="#222" stroke-width="1.3"/></svg>
<div class="combo" style="left:843px;top:489px;width:80px"><div class="dv" style="left:60px"></div><span style="left:5px;top:0px">50%</span><svg width="8" height="10" style="left:67px;top:5px"><path d="M6,0.5 V9.5 L0,5 Z" fill="#cfcfcf"/></svg></div>
<svg style="left:932px;top:488px;" width="24" height="24" viewBox="0 0 24 24"><path d="M15.5,15.5 L22,22.5" stroke="#3a4a54" stroke-width="2.4" stroke-linecap="round"/><circle cx="10" cy="9.5" r="7.6" fill="url(#gLens)" stroke="#3b6670" stroke-width="1.5"/><ellipse cx="8.5" cy="7.5" rx="3.5" ry="2.5" fill="#eef8fa" fill-opacity="0.6"/><path d="M10,5 V13 M10,5 l-2,2 M10,5 l2,2 M10,13 l-2,-2 M10,13 l2,-2" stroke="#222" stroke-width="1.3"/></svg>
<div class="combo" style="left:960px;top:489px;width:80px"><div class="dv" style="left:61px"></div><span style="left:5px;top:0px">Auto</span><svg width="8" height="10" style="left:68px;top:5px"><path d="M6,0.5 V9.5 L0,5 Z" fill="#cfcfcf"/></svg></div>
<div style="left:1054px;top:485px;font-size:22px;font-weight:bold;color:#fff;line-height:26px;-webkit-text-stroke:0.9px #fff;text-shadow:1px 1px 1px #333">Q</div>
<div class="combo" style="left:1080px;top:489px;width:58px"><div class="dv" style="left:39px"></div><span style="left:5px;top:0px">1/16</span><svg width="8" height="10" style="left:46px;top:5px"><path d="M6,0.5 V9.5 L0,5 Z" fill="#cfcfcf"/></svg></div>
<div style="left:283px;top:516px;width:997px;height:18px;background:linear-gradient(#909caa,#717d8a 50%,#545e68)"></div>
<div style="left:392.0px;top:521px;font-size:9.5px;color:#c8ced6;line-height:10px">1</div>
<div style="left:488.0px;top:521px;font-size:9.5px;color:#c8ced6;line-height:10px">2</div>
<div style="left:584.0px;top:521px;font-size:9.5px;color:#c8ced6;line-height:10px">3</div>
<div style="left:680.0px;top:521px;font-size:9.5px;color:#c8ced6;line-height:10px">4</div>
<div style="left:776.0px;top:521px;font-size:9.5px;color:#c8ced6;line-height:10px">5</div>
<div style="left:872.0px;top:521px;font-size:9.5px;color:#c8ced6;line-height:10px">6</div>
<div style="left:968.0px;top:521px;font-size:9.5px;color:#c8ced6;line-height:10px">7</div>
<div style="left:1064.0px;top:521px;font-size:9.5px;color:#c8ced6;line-height:10px">8</div>
<div style="left:1160.0px;top:521px;font-size:9.5px;color:#c8ced6;line-height:10px">9</div>
<div style="left:1253.5px;top:521px;font-size:9.5px;color:#c8ced6;line-height:10px">10</div>
<div style="left:539px;top:521px;width:1px;height:8px;background:#e2e6ea"></div>
<div style="left:635px;top:521px;width:1px;height:8px;background:#e2e6ea"></div>
<div style="left:731px;top:521px;width:1px;height:8px;background:#e2e6ea"></div>
<div style="left:827px;top:521px;width:1px;height:8px;background:#e2e6ea"></div>
<div style="left:923px;top:521px;width:1px;height:8px;background:#e2e6ea"></div>
<div style="left:1019px;top:521px;width:1px;height:8px;background:#e2e6ea"></div>
<div style="left:1115px;top:521px;width:1px;height:8px;background:#e2e6ea"></div>
<div style="left:1211px;top:521px;width:1px;height:8px;background:#e2e6ea"></div>
<svg style="left:336px;top:517px;" width="22" height="17" viewBox="0 0 22 17"><path d="M5,7.5 V2 L11,7 L17,2 V7.5" fill="none" stroke="#5f8a80" stroke-width="1.2"/><path d="M3,7.5 H20 L11.5,17 Z" fill="#cfd4d8"/><path d="M11.5,3 V14" stroke="#f4f4f4" stroke-width="1"/></svg>
<svg style="left:437px;top:518px;" width="13" height="13" viewBox="0 0 13 13"><path d="M1,1.5 V10.5 L5.5,6 Z M12,1.5 V10.5 L7.5,6 Z" fill="#4f7a70" fill-opacity="0.35" stroke="#5f9a88" stroke-width="0.9"/><path d="M6.5,2.5 V11" stroke="#e8eef0" stroke-width="1.1"/></svg>
<div style="left:283px;top:534px;width:64px;height:266px;background:#333"></div>
<div style="left:331px;top:533px;font-size:9.5px;color:#eee;line-height:10px;text-decoration:underline">1</div>
<div style="left:347px;top:534px;width:933px;height:266px;background-color:#000;
background-image:linear-gradient(90deg,#8e8e8e 1px,transparent 1px),linear-gradient(90deg,#656565 1px,transparent 1px);background-size:48px 6px,6px 6px"></div>
<svg style="left:347px;top:534px;" width="933" height="266" viewBox="0 0 933 266"><line x1="0" y1="39.5" x2="933" y2="39.5" stroke="#8a8a8a" stroke-width="1" stroke-dasharray="1 2"/><line x1="0" y1="81.5" x2="933" y2="81.5" stroke="#8a8a8a" stroke-width="1" stroke-dasharray="1 2"/><line x1="0" y1="123.5" x2="933" y2="123.5" stroke="#8a8a8a" stroke-width="1" stroke-dasharray="1 2"/><line x1="0" y1="165.5" x2="933" y2="165.5" stroke="#8a8a8a" stroke-width="1" stroke-dasharray="1 2"/><line x1="0" y1="207.5" x2="933" y2="207.5" stroke="#8a8a8a" stroke-width="1" stroke-dasharray="1 2"/><line x1="0" y1="249.5" x2="933" y2="249.5" stroke="#8a8a8a" stroke-width="1" stroke-dasharray="1 2"/><path transform="translate(-347,-534)" d="M353,800 L353,753 L354,752.60 L355,752.21 L356,751.81 L357,751.40 L358,750.99 L359,750.58 L360,750.17 L361,749.76 L362,749.34 L363,748.92 L364,748.50 L365,748.07 L366,747.64 L367,747.21 L368,746.78 L369,746.34 L370,745.90 L371,745.46 L372,745.02 L373,744.57 L374,744.13 L375,743.68 L376,743.22 L377,742.77 L378,742.31 L379,741.86 L380,741.40 L381,740.93 L382,740.47 L383,740.00 L384,739.53 L385,739.06 L386,738.59 L387,738.12 L388,737.64 L389,737.16 L390,736.68 L391,736.20 L392,735.72 L393,735.23 L394,734.75 L395,734.26 L396,733.77 L397,733.28 L398,732.79 L399,732.29 L400,731.80 L401,731.30 L402,730.80 L403,730.30 L404,729.80 L405,729.30 L406,728.80 L407,728.29 L408,727.79 L409,727.28 L410,726.78 L411,726.27 L412,725.76 L413,725.25 L414,724.73 L415,724.22 L416,723.71 L417,723.20 L418,722.68 L419,722.16 L420,721.65 L421,721.13 L422,720.61 L423,720.09 L424,719.58 L425,719.06 L426,718.54 L427,718.02 L428,717.49 L429,716.97 L430,716.45 L431,715.93 L432,715.41 L433,714.88 L434,714.36 L435,713.84 L436,713.31 L437,712.79 L438,712.26 L439,711.74 L440,711.22 L441,710.69 L442,710.17 L443,709.64 L444,709.12 L445,708.60 L446,708.07 L447,707.55 L448,707.02 L449,706.50 L450,705.98 L451,705.46 L452,704.93 L453,704.41 L454,703.89 L455,703.37 L456,702.85 L457,702.33 L458,701.81 L459,701.29 L460,700.77 L461,700.25 L462,699.74 L463,699.22 L464,698.70 L465,698.19 L466,697.68 L467,697.16 L468,696.65 L469,696.14 L470,695.63 L471,695.12 L472,694.61 L473,694.10 L474,693.60 L475,693.09 L476,692.59 L477,692.08 L478,691.58 L479,691.08 L480,690.58 L481,690.08 L482,689.59 L483,689.09 L484,688.60 L485,688.11 L486,687.61 L487,687.13 L488,686.64 L489,686.15 L490,685.67 L491,685.18 L492,684.70 L493,684.22 L494,683.75 L495,683.27 L496,682.79 L497,682.32 L498,681.85 L499,681.38 L500,680.92 L501,680.45 L502,679.99 L503,679.53 L504,679.07 L505,678.61 L506,678.16 L507,677.71 L508,677.26 L509,676.81 L510,676.37 L511,675.92 L512,675.48 L513,675.04 L514,674.61 L515,674.17 L516,673.74 L517,673.32 L518,672.89 L519,672.47 L520,672.05 L521,671.63 L522,671.21 L523,670.80 L524,670.39 L525,669.98 L526,669.58 L527,669.18 L528,668.78 L529,668.38 L530,667.99 L531,667.60 L532,667.22 L533,666.83 L534,666.45 L535,666.08 L536,665.70 L537,665.33 L538,664.96 L539,664.60 L540,664.24 L541,663.88 L542,663.53 L543,663.17 L544,662.83 L545,662.48 L546,662.14 L547,661.81 L548,661.47 L549,661.14 L550,660.82 L551,660.49 L552,660.18 L553,659.86 L554,659.55 L555,659.24 L556,658.94 L557,658.64 L558,658.34 L559,658.05 L560,657.76 L561,657.48 L562,657.20 L563,656.92 L564,656.65 L565,656.38 L566,656.12 L567,655.86 L568,655.60 L569,655.35 L570,655.11 L571,654.87 L572,654.63 L573,654.39 L574,654.17 L575,653.94 L576,653.72 L577,653.51 L578,653.29 L579,653.09 L580,652.89 L581,652.69 L582,652.50 L583,652.31 L584,652.13 L585,651.95 L586,651.78 L587,651.61 L588,651.45 L589,651.29 L590,651.13 L591,650.99 L592,650.84 L593,650.70 L594,650.57 L595,650.44 L596,650.32 L597,650.20 L598,650.09 L599,649.98 L600,649.88 L601,649.79 L602,649.70 L603,649.61 L604,649.53 L605,649.46 L606,649.39 L607,649.32 L608,649.26 L609,649.21 L610,649.17 L611,649.12 L612,649.09 L613,649.06 L614,649.04 L615,649.02 L616,649.01 L617,649.00 L618,649.14 L619,649.54 L620,650.21 L621,651.12 L622,652.26 L623,653.62 L624,655.20 L625,656.97 L626,658.93 L627,661.06 L628,663.36 L629,665.80 L630,668.39 L631,671.09 L632,673.91 L633,676.84 L634,679.85 L635,682.94 L636,686.09 L637,689.30 L638,692.55 L639,695.83 L640,699.13 L641,702.43 L642,705.73 L643,709.00 L644,712.25 L645,715.45 L646,718.60 L647,721.68 L648,724.68 L649,727.60 L650,730.40 L651,733.10 L652,735.67 L653,738.09 L654,740.37 L655,742.48 L656,744.42 L657,746.17 L658,747.72 L659,749.07 L660,750.18 L661,751.06 L662,751.70 L663,752.08 L664,752.18 L665,752.00 L666,751.60 L667,751.06 L668,750.39 L669,749.57 L670,748.63 L671,747.57 L672,746.38 L673,745.08 L674,743.66 L675,742.13 L676,740.50 L677,738.77 L678,736.95 L679,735.03 L680,733.02 L681,730.93 L682,728.77 L683,726.52 L684,724.21 L685,721.83 L686,719.38 L687,716.88 L688,714.32 L689,711.72 L690,709.07 L691,706.37 L692,703.64 L693,700.88 L694,698.09 L695,695.27 L696,692.43 L697,689.57 L698,686.71 L699,683.83 L700,680.95 L701,678.08 L702,675.20 L703,672.34 L704,669.48 L705,666.65 L706,663.83 L707,661.04 L708,658.29 L709,655.56 L710,652.87 L711,650.23 L712,647.63 L713,645.08 L714,642.59 L715,640.15 L716,637.78 L717,635.48 L718,633.25 L719,631.09 L720,629.01 L721,627.02 L722,625.12 L723,623.31 L724,621.59 L725,619.98 L726,618.47 L727,617.07 L728,615.78 L729,614.61 L730,613.57 L731,612.65 L732,611.85 L733,611.20 L734,610.68 L735,610.31 L736,610.08 L737,610.00 L738,610.03 L739,610.12 L740,610.27 L741,610.48 L742,610.74 L743,611.06 L744,611.43 L745,611.86 L746,612.34 L747,612.87 L748,613.45 L749,614.08 L750,614.76 L751,615.49 L752,616.26 L753,617.08 L754,617.95 L755,618.85 L756,619.80 L757,620.79 L758,621.82 L759,622.89 L760,624.00 L761,625.15 L762,626.33 L763,627.55 L764,628.80 L765,630.08 L766,631.40 L767,632.74 L768,634.12 L769,635.53 L770,636.96 L771,638.42 L772,639.91 L773,641.42 L774,642.95 L775,644.51 L776,646.09 L777,647.69 L778,649.31 L779,650.95 L780,652.61 L781,654.28 L782,655.97 L783,657.67 L784,659.39 L785,661.12 L786,662.86 L787,664.61 L788,666.38 L789,668.15 L790,669.92 L791,671.71 L792,673.49 L793,675.29 L794,677.08 L795,678.88 L796,680.68 L797,682.48 L798,684.28 L799,686.08 L800,687.87 L801,689.66 L802,691.45 L803,693.23 L804,695.00 L805,696.77 L806,698.52 L807,700.27 L808,702.00 L809,703.72 L810,705.43 L811,707.13 L812,708.81 L813,710.47 L814,712.12 L815,713.74 L816,715.35 L817,716.94 L818,718.51 L819,720.05 L820,721.57 L821,723.07 L822,724.54 L823,725.99 L824,727.40 L825,728.79 L826,730.15 L827,731.48 L828,732.78 L829,734.04 L830,735.27 L831,736.47 L832,737.63 L833,738.75 L834,739.83 L835,740.88 L836,741.89 L837,742.85 L838,743.78 L839,744.66 L840,745.49 L841,746.29 L842,747.03 L843,747.73 L844,748.38 L845,748.98 L846,749.54 L847,750.04 L848,750.48 L849,750.88 L850,751.22 L851,751.51 L852,751.73 L853,751.91 L854,752.02 L855,752.07 L856,752.07 L857,752.00 L858,751.89 L859,751.76 L860,751.61 L861,751.43 L862,751.24 L863,751.03 L864,750.79 L865,750.54 L866,750.26 L867,749.97 L868,749.65 L869,749.32 L870,748.96 L871,748.59 L872,748.20 L873,747.79 L874,747.37 L875,746.92 L876,746.46 L877,745.98 L878,745.48 L879,744.96 L880,744.43 L881,743.88 L882,743.31 L883,742.73 L884,742.13 L885,741.52 L886,740.89 L887,740.24 L888,739.58 L889,738.90 L890,738.21 L891,737.50 L892,736.78 L893,736.05 L894,735.30 L895,734.54 L896,733.76 L897,732.97 L898,732.17 L899,731.35 L900,730.52 L901,729.68 L902,728.82 L903,727.96 L904,727.08 L905,726.19 L906,725.29 L907,724.37 L908,723.45 L909,722.51 L910,721.57 L911,720.61 L912,719.64 L913,718.67 L914,717.68 L915,716.68 L916,715.68 L917,714.66 L918,713.63 L919,712.60 L920,711.56 L921,710.51 L922,709.45 L923,708.38 L924,707.31 L925,706.23 L926,705.14 L927,704.04 L928,702.94 L929,701.82 L930,700.71 L931,699.58 L932,698.45 L933,697.32 L934,696.18 L935,695.03 L936,693.88 L937,692.72 L938,691.56 L939,690.39 L940,689.22 L941,688.05 L942,686.87 L943,685.68 L944,684.50 L945,683.31 L946,682.11 L947,680.92 L948,679.72 L949,678.51 L950,677.31 L951,676.10 L952,674.90 L953,673.68 L954,672.47 L955,671.26 L956,670.05 L957,668.83 L958,667.62 L959,666.40 L960,665.18 L961,663.97 L962,662.75 L963,661.53 L964,660.32 L965,659.10 L966,657.89 L967,656.68 L968,655.47 L969,654.26 L970,653.05 L971,651.84 L972,650.64 L973,649.44 L974,648.24 L975,647.05 L976,645.85 L977,644.67 L978,643.48 L979,642.30 L980,641.12 L981,639.95 L982,638.78 L983,637.61 L984,636.45 L985,635.30 L986,634.15 L987,633.00 L988,631.87 L989,630.73 L990,629.61 L991,628.48 L992,627.37 L993,626.26 L994,625.16 L995,624.07 L996,622.98 L997,621.90 L998,620.83 L999,619.77 L1000,618.71 L1001,617.66 L1002,616.63 L1003,615.60 L1004,614.58 L1005,613.56 L1006,612.56 L1007,611.57 L1008,610.59 L1009,609.61 L1010,608.65 L1011,607.70 L1012,606.76 L1013,605.83 L1014,604.91 L1015,604.00 L1016,603.10 L1017,602.22 L1018,601.34 L1019,600.48 L1020,599.63 L1021,598.80 L1022,597.97 L1023,597.16 L1024,596.36 L1025,595.58 L1026,594.81 L1027,594.05 L1028,593.31 L1029,592.58 L1030,591.86 L1031,591.16 L1032,590.48 L1033,589.81 L1034,589.15 L1035,588.51 L1036,587.89 L1037,587.28 L1038,586.69 L1039,586.12 L1040,585.56 L1041,585.01 L1042,584.49 L1043,583.98 L1044,583.49 L1045,583.02 L1046,582.56 L1047,582.12 L1048,581.70 L1049,581.30 L1050,580.92 L1051,580.56 L1052,580.21 L1053,579.89 L1054,579.58 L1055,579.29 L1056,579.03 L1057,578.78 L1058,578.55 L1059,578.35 L1060,578.16 L1061,578.00 L1062,577.86 L1063,577.74 L1064,577.65 L1065,577.58 L1066,577.54 L1067,577.51 L1068,577.51 L1069,577.54 L1070,577.59 L1071,577.65 L1072,577.75 L1073,577.86 L1074,577.99 L1075,578.15 L1076,578.33 L1077,578.52 L1078,578.74 L1079,578.98 L1080,579.24 L1081,579.52 L1082,579.81 L1083,580.13 L1084,580.46 L1085,580.82 L1086,581.19 L1087,581.58 L1088,581.99 L1089,582.41 L1090,582.86 L1091,583.32 L1092,583.79 L1093,584.29 L1094,584.80 L1095,585.32 L1096,585.86 L1097,586.42 L1098,586.99 L1099,587.58 L1100,588.18 L1101,588.80 L1102,589.42 L1103,590.07 L1104,590.73 L1105,591.40 L1106,592.08 L1107,592.78 L1108,593.48 L1109,594.21 L1110,594.94 L1111,595.68 L1112,596.44 L1113,597.21 L1114,597.99 L1115,598.77 L1116,599.57 L1117,600.38 L1118,601.20 L1119,602.03 L1120,602.87 L1121,603.72 L1122,604.57 L1123,605.44 L1124,606.31 L1125,607.19 L1126,608.08 L1127,608.98 L1128,609.88 L1129,610.79 L1130,611.71 L1131,612.63 L1132,613.56 L1133,614.50 L1134,615.44 L1135,616.39 L1136,617.34 L1137,618.29 L1138,619.25 L1139,620.22 L1140,621.19 L1141,622.16 L1142,623.14 L1143,624.12 L1144,625.10 L1145,626.09 L1146,627.08 L1147,628.07 L1148,629.06 L1149,630.05 L1150,631.05 L1151,632.04 L1152,633.04 L1153,634.04 L1154,635.04 L1155,636.03 L1156,637.03 L1157,638.03 L1158,639.03 L1159,640.02 L1160,641.02 L1161,642.01 L1162,643.00 L1163,643.99 L1164,644.98 L1165,645.96 L1166,646.94 L1167,647.92 L1168,648.89 L1169,649.87 L1170,650.83 L1171,651.80 L1172,652.75 L1173,653.71 L1174,654.66 L1175,655.60 L1176,656.54 L1177,657.47 L1178,658.40 L1179,659.32 L1180,660.23 L1181,661.14 L1182,662.04 L1183,662.93 L1184,663.81 L1185,664.69 L1186,665.56 L1187,666.42 L1188,667.27 L1189,668.11 L1190,668.94 L1191,669.77 L1192,670.58 L1193,671.39 L1194,672.18 L1195,672.96 L1196,673.73 L1197,674.50 L1198,675.25 L1199,675.98 L1200,676.71 L1201,677.42 L1202,678.13 L1203,678.82 L1204,679.49 L1205,680.16 L1206,680.80 L1207,681.44 L1208,682.06 L1209,682.67 L1210,683.26 L1211,683.84 L1212,684.40 L1213,684.95 L1214,685.48 L1215,686.00 L1216,686.50 L1217,686.99 L1218,687.45 L1219,687.90 L1220,688.34 L1221,688.75 L1222,689.15 L1223,689.53 L1224,689.89 L1225,690.24 L1226,690.56 L1227,690.87 L1228,691.15 L1229,691.42 L1230,691.67 L1231,691.89 L1232,692.10 L1233,692.29 L1234,692.45 L1235,692.60 L1236,692.72 L1237,692.82 L1238,692.90 L1239,692.95 L1240,692.99 L1241,693.00 L1280,693 L1280,800 Z" fill="#9fadfc" shape-rendering="crispEdges"/><line x1="0" y1="180.5" x2="933" y2="180.5" stroke="rgba(225,40,40,0.85)" stroke-width="1.1"/><circle cx="6" cy="219" r="3.3" fill="#c8102e" stroke="#fff" stroke-width="1.1"/><circle cx="270" cy="115" r="3.3" fill="#c8102e" stroke="#fff" stroke-width="1.1"/><circle cx="318" cy="218" r="3.3" fill="#c8102e" stroke="#fff" stroke-width="1.1"/><circle cx="390" cy="76" r="3.3" fill="#c8102e" stroke="#fff" stroke-width="1.1"/><circle cx="510" cy="218" r="3.3" fill="#c8102e" stroke="#fff" stroke-width="1.1"/><circle cx="714" cy="44" r="3.3" fill="#c8102e" stroke="#fff" stroke-width="1.1"/><circle cx="894" cy="159" r="3.3" fill="#c8102e" stroke="#fff" stroke-width="1.1"/></svg>
</body></html>
